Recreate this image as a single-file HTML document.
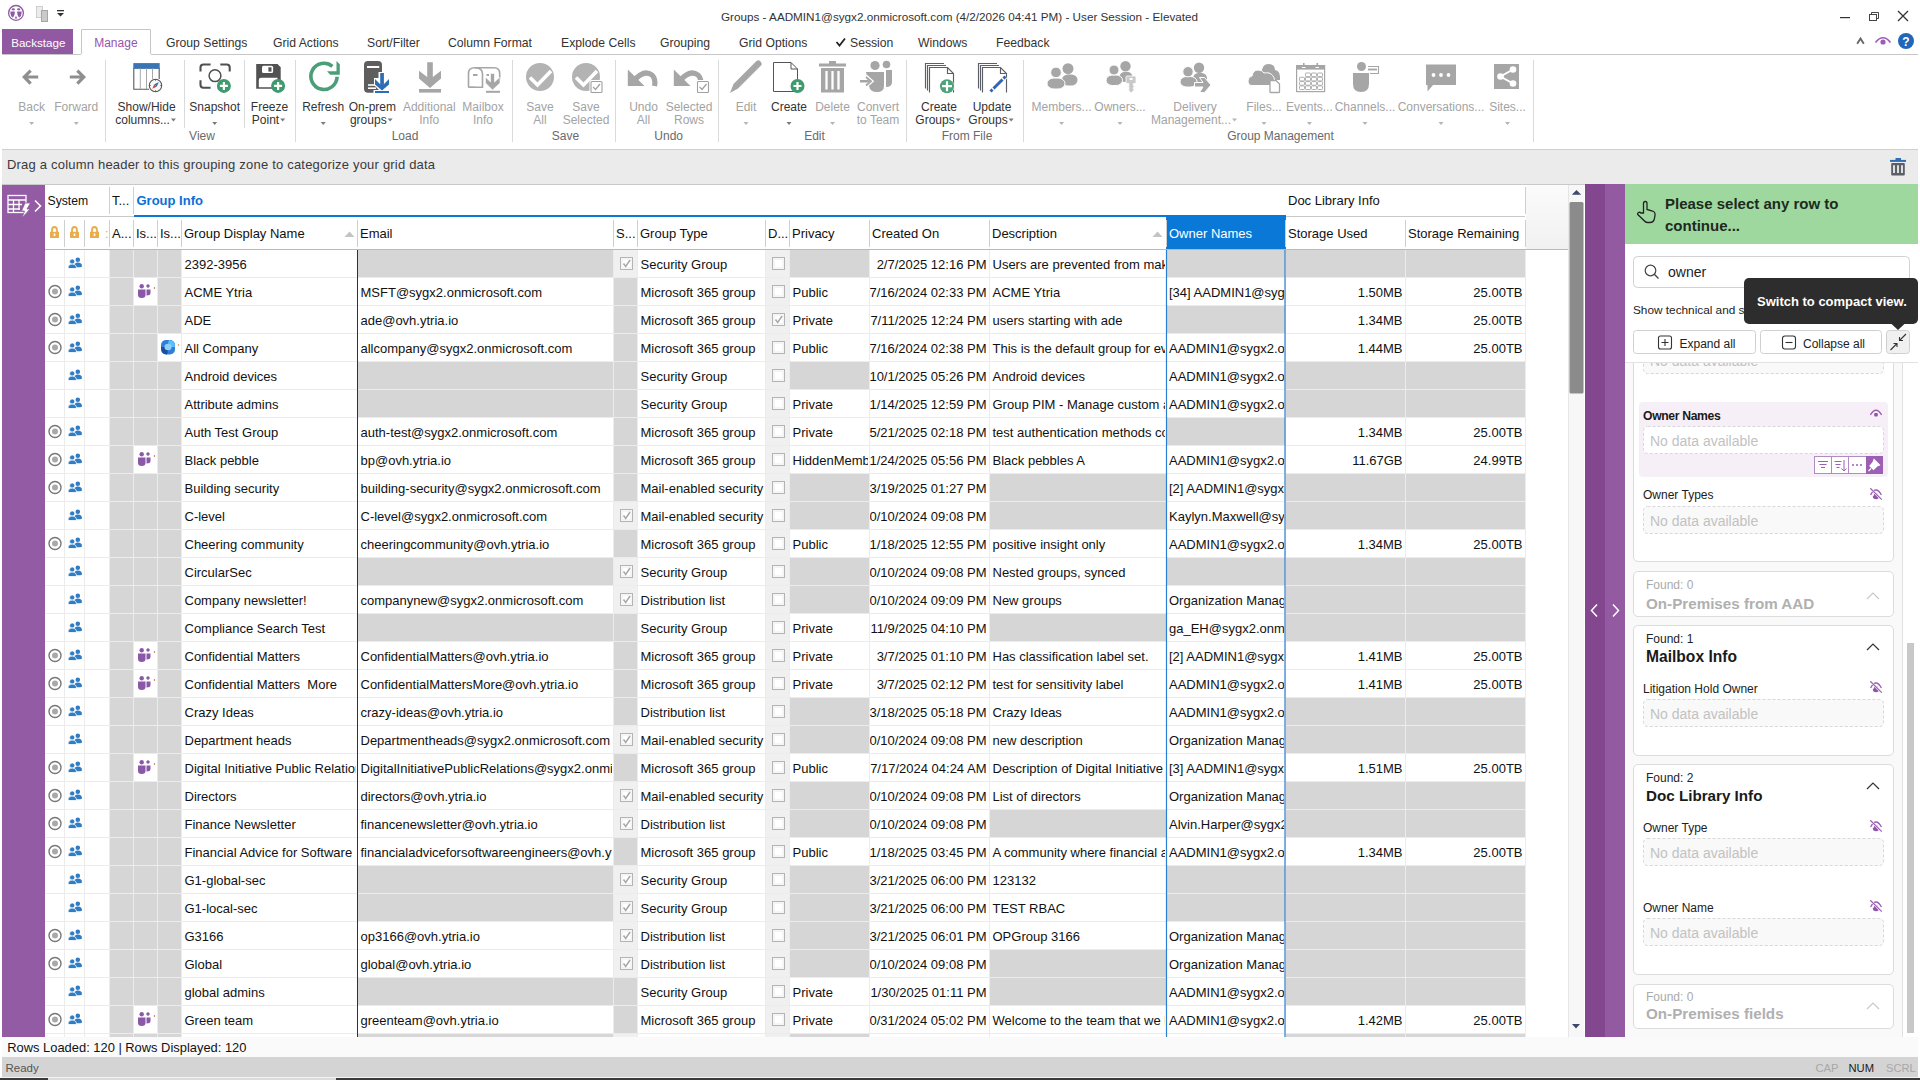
<!DOCTYPE html>
<html><head><meta charset="utf-8"><title>Groups</title>
<style>html,body{margin:0;padding:0;width:1920px;height:1080px;overflow:hidden;background:#fff;font-family:'Liberation Sans', sans-serif;}
svg text{white-space:pre;}</style></head>
<body><svg width="1920" height="1080" viewBox="0 0 1920 1080" style="position:absolute;left:0;top:0" font-family="'Liberation Sans', sans-serif"><defs><clipPath id="c_name"><rect x="182" y="250" width="174" height="787"/></clipPath><clipPath id="c_email"><rect x="358" y="250" width="254" height="787"/></clipPath><clipPath id="c_type"><rect x="638" y="250" width="126" height="787"/></clipPath><clipPath id="c_priv"><rect x="790" y="250" width="78" height="787"/></clipPath><clipPath id="c_created"><rect x="870" y="250" width="118" height="787"/></clipPath><clipPath id="c_desc"><rect x="990" y="250" width="175" height="787"/></clipPath><clipPath id="c_owner"><rect x="1167" y="250" width="117" height="787"/></clipPath><linearGradient id="hg" x1="0" y1="0" x2="0" y2="1"><stop offset="0" stop-color="#fbfbfb"/><stop offset="1" stop-color="#f1f1f1"/></linearGradient><clipPath id="c_panel"><rect x="1625" y="363" width="295" height="674"/></clipPath></defs><rect x="0" y="0" width="1920" height="1080" fill="#ffffff" />
<circle cx="16" cy="12.9" r="7.4" fill="none" stroke="#8e5aa2" stroke-width="1.3"/>
<g fill="#8e5aa2"><path d="M10.3 11.6 Q10.6 16.6 12.6 17.6 Q14.6 16.6 14.9 11.6 Z"/><path d="M21.7 11.6 Q21.4 16.6 19.4 17.6 Q17.4 16.6 17.1 11.6 Z"/><ellipse cx="13.3" cy="9.3" rx="1.7" ry="1.1"/><ellipse cx="18.7" cy="9.3" rx="1.7" ry="1.1"/><path d="M14.7 18.5 L16 15.8 L17.3 18.5 Z"/></g>
<rect x="36.5" y="6.5" width="6" height="11" fill="#ececec" stroke="#cfcfcf"/><rect x="41.5" y="10.5" width="6" height="11" fill="#cacaca" stroke="#a6a6a6"/>
<rect x="57" y="10" width="7" height="1.3" fill="#333"/><path d="M57 13 L64 13 L60.5 16.5 Z" fill="#333"/>
<text x="959.5" y="21" font-size="11.7" fill="#333" text-anchor="middle" font-weight="normal" >Groups - AADMIN1@sygx2.onmicrosoft.com (4/2/2026 04:41 PM) - User Session - Elevated</text>
<rect x="1840" y="17" width="10" height="1.2" fill="#333" />
<rect x="1869.5" y="14.5" width="7" height="6" fill="none" stroke="#444" stroke-width="1"/><path d="M1871.5 14.5 V12.5 H1878.5 V18.5 H1876.5" fill="none" stroke="#444" stroke-width="1"/>
<path d="M1898 11 L1908 21 M1908 11 L1898 21" stroke="#333" stroke-width="1.3"/>
<rect x="2" y="29" width="71" height="25" fill="#9159a2" />
<text x="11.2" y="47" font-size="11.6" fill="#ffffff" text-anchor="start" font-weight="normal" >Backstage</text>
<path d="M81.5 54 V29.5 H150.5 V54" fill="#fff" stroke="#c6c6c6" stroke-width="1"/>
<line x1="2" y1="54.5" x2="81" y2="54.5" stroke="#c6c6c6" stroke-width="1" />
<line x1="151" y1="54.5" x2="1918" y2="54.5" stroke="#c6c6c6" stroke-width="1" />
<text x="94.2" y="47" font-size="12" fill="#9a52ad" text-anchor="start" font-weight="normal" >Manage</text>
<text x="166" y="47" font-size="12.2" fill="#333" text-anchor="start" font-weight="normal" >Group Settings</text>
<text x="273" y="47" font-size="12.2" fill="#333" text-anchor="start" font-weight="normal" >Grid Actions</text>
<text x="367" y="47" font-size="12.2" fill="#333" text-anchor="start" font-weight="normal" >Sort/Filter</text>
<text x="448" y="47" font-size="12.2" fill="#333" text-anchor="start" font-weight="normal" >Column Format</text>
<text x="561" y="47" font-size="12.2" fill="#333" text-anchor="start" font-weight="normal" >Explode Cells</text>
<text x="660" y="47" font-size="12.2" fill="#333" text-anchor="start" font-weight="normal" >Grouping</text>
<text x="739" y="47" font-size="12.2" fill="#333" text-anchor="start" font-weight="normal" >Grid Options</text>
<text x="850" y="47" font-size="12.2" fill="#333" text-anchor="start" font-weight="normal" >Session</text>
<text x="918" y="47" font-size="12.2" fill="#333" text-anchor="start" font-weight="normal" >Windows</text>
<text x="996" y="47" font-size="12.2" fill="#333" text-anchor="start" font-weight="normal" >Feedback</text>
<path d="M836.5 42 L839.5 45.5 L845 38.5" fill="none" stroke="#222" stroke-width="1.8"/>
<path d="M1857.2 43.8 L1860.5 38.5 L1863.8 43.8" fill="none" stroke="#666" stroke-width="1.9"/>
<path d="M1875.5 42.5 Q1883 33 1890.5 42.5" fill="none" stroke="#a05ab8" stroke-width="1.6"/><circle cx="1883" cy="42" r="2.6" fill="#a05ab8"/>
<circle cx="1906" cy="41" r="8" fill="#2166b8"/><text x="1906" y="45.5" font-size="12" font-weight="bold" fill="#fff" text-anchor="middle">?</text>
<text x="31.6" y="111" font-size="12" fill="#a3a3a3" text-anchor="middle" font-weight="normal" >Back</text>
<path d="M29.1 122.0 L34.1 122.0 L31.6 125.0 Z" fill="#b5b5b5"/>
<text x="76.3" y="111" font-size="12" fill="#a3a3a3" text-anchor="middle" font-weight="normal" >Forward</text>
<path d="M73.8 122.0 L78.8 122.0 L76.3 125.0 Z" fill="#b5b5b5"/>
<text x="146.6" y="111" font-size="12" fill="#333333" text-anchor="middle" font-weight="normal" >Show/Hide</text>
<text x="142.6" y="124" font-size="12" fill="#333333" text-anchor="middle" font-weight="normal" >columns...</text>
<path d="M170.94296875 118.5 L175.94296875 118.5 L173.44296875 121.5 Z" fill="#7a7a7a"/>
<text x="214.7" y="111" font-size="12" fill="#333333" text-anchor="middle" font-weight="normal" >Snapshot</text>
<path d="M212.2 122.0 L217.2 122.0 L214.7 125.0 Z" fill="#7a7a7a"/>
<text x="269.5" y="111" font-size="12" fill="#333333" text-anchor="middle" font-weight="normal" >Freeze</text>
<text x="265.5" y="124" font-size="12" fill="#333333" text-anchor="middle" font-weight="normal" >Point</text>
<path d="M280.17578125 118.5 L285.17578125 118.5 L282.67578125 121.5 Z" fill="#7a7a7a"/>
<text x="323.2" y="111" font-size="12" fill="#333333" text-anchor="middle" font-weight="normal" >Refresh</text>
<path d="M320.7 122.0 L325.7 122.0 L323.2 125.0 Z" fill="#7a7a7a"/>
<text x="372.3" y="111" font-size="12" fill="#333333" text-anchor="middle" font-weight="normal" >On-prem</text>
<text x="368.3" y="124" font-size="12" fill="#333333" text-anchor="middle" font-weight="normal" >groups</text>
<path d="M387.6453125 118.5 L392.6453125 118.5 L390.1453125 121.5 Z" fill="#7a7a7a"/>
<text x="429.3" y="111" font-size="12" fill="#a3a3a3" text-anchor="middle" font-weight="normal" >Additional</text>
<text x="429.3" y="124" font-size="12" fill="#a3a3a3" text-anchor="middle" font-weight="normal" >Info</text>
<text x="483" y="111" font-size="12" fill="#a3a3a3" text-anchor="middle" font-weight="normal" >Mailbox</text>
<text x="483" y="124" font-size="12" fill="#a3a3a3" text-anchor="middle" font-weight="normal" >Info</text>
<text x="540" y="111" font-size="12" fill="#a3a3a3" text-anchor="middle" font-weight="normal" >Save</text>
<text x="540" y="124" font-size="12" fill="#a3a3a3" text-anchor="middle" font-weight="normal" >All</text>
<text x="586" y="111" font-size="12" fill="#a3a3a3" text-anchor="middle" font-weight="normal" >Save</text>
<text x="586" y="124" font-size="12" fill="#a3a3a3" text-anchor="middle" font-weight="normal" >Selected</text>
<text x="643.5" y="111" font-size="12" fill="#a3a3a3" text-anchor="middle" font-weight="normal" >Undo</text>
<text x="643.5" y="124" font-size="12" fill="#a3a3a3" text-anchor="middle" font-weight="normal" >All</text>
<text x="689" y="111" font-size="12" fill="#a3a3a3" text-anchor="middle" font-weight="normal" >Selected</text>
<text x="689" y="124" font-size="12" fill="#a3a3a3" text-anchor="middle" font-weight="normal" >Rows</text>
<text x="746" y="111" font-size="12" fill="#a3a3a3" text-anchor="middle" font-weight="normal" >Edit</text>
<path d="M743.5 122.0 L748.5 122.0 L746 125.0 Z" fill="#b5b5b5"/>
<text x="789" y="111" font-size="12" fill="#333333" text-anchor="middle" font-weight="normal" >Create</text>
<path d="M786.5 122.0 L791.5 122.0 L789 125.0 Z" fill="#7a7a7a"/>
<text x="832.5" y="111" font-size="12" fill="#a3a3a3" text-anchor="middle" font-weight="normal" >Delete</text>
<path d="M830.0 122.0 L835.0 122.0 L832.5 125.0 Z" fill="#b5b5b5"/>
<text x="878" y="111" font-size="12" fill="#a3a3a3" text-anchor="middle" font-weight="normal" >Convert</text>
<text x="878" y="124" font-size="12" fill="#a3a3a3" text-anchor="middle" font-weight="normal" >to Team</text>
<text x="939" y="111" font-size="12" fill="#333333" text-anchor="middle" font-weight="normal" >Create</text>
<text x="935" y="124" font-size="12" fill="#333333" text-anchor="middle" font-weight="normal" >Groups</text>
<path d="M955.67578125 118.5 L960.67578125 118.5 L958.17578125 121.5 Z" fill="#7a7a7a"/>
<text x="992" y="111" font-size="12" fill="#333333" text-anchor="middle" font-weight="normal" >Update</text>
<text x="988" y="124" font-size="12" fill="#333333" text-anchor="middle" font-weight="normal" >Groups</text>
<path d="M1008.67578125 118.5 L1013.67578125 118.5 L1011.17578125 121.5 Z" fill="#7a7a7a"/>
<text x="1061.6" y="111" font-size="12" fill="#a3a3a3" text-anchor="middle" font-weight="normal" >Members...</text>
<path d="M1059.1 122.0 L1064.1 122.0 L1061.6 125.0 Z" fill="#b5b5b5"/>
<text x="1120" y="111" font-size="12" fill="#a3a3a3" text-anchor="middle" font-weight="normal" >Owners...</text>
<path d="M1117.5 122.0 L1122.5 122.0 L1120 125.0 Z" fill="#b5b5b5"/>
<text x="1195" y="111" font-size="12" fill="#a3a3a3" text-anchor="middle" font-weight="normal" >Delivery</text>
<text x="1191" y="124" font-size="12" fill="#a3a3a3" text-anchor="middle" font-weight="normal" >Management...</text>
<path d="M1232.02265625 118.5 L1237.02265625 118.5 L1234.52265625 121.5 Z" fill="#b5b5b5"/>
<text x="1264" y="111" font-size="12" fill="#a3a3a3" text-anchor="middle" font-weight="normal" >Files...</text>
<path d="M1261.5 122.0 L1266.5 122.0 L1264 125.0 Z" fill="#b5b5b5"/>
<text x="1309.4" y="111" font-size="12" fill="#a3a3a3" text-anchor="middle" font-weight="normal" >Events...</text>
<path d="M1306.9 122.0 L1311.9 122.0 L1309.4 125.0 Z" fill="#b5b5b5"/>
<text x="1365" y="111" font-size="12" fill="#a3a3a3" text-anchor="middle" font-weight="normal" >Channels...</text>
<path d="M1362.5 122.0 L1367.5 122.0 L1365 125.0 Z" fill="#b5b5b5"/>
<text x="1441" y="111" font-size="12" fill="#a3a3a3" text-anchor="middle" font-weight="normal" >Conversations...</text>
<path d="M1438.5 122.0 L1443.5 122.0 L1441 125.0 Z" fill="#b5b5b5"/>
<text x="1507.5" y="111" font-size="12" fill="#a3a3a3" text-anchor="middle" font-weight="normal" >Sites...</text>
<path d="M1505.0 122.0 L1510.0 122.0 L1507.5 125.0 Z" fill="#b5b5b5"/>
<text x="202" y="139.5" font-size="12" fill="#6a6a6a" text-anchor="middle" font-weight="normal" >View</text>
<text x="405" y="139.5" font-size="12" fill="#6a6a6a" text-anchor="middle" font-weight="normal" >Load</text>
<text x="565.5" y="139.5" font-size="12" fill="#6a6a6a" text-anchor="middle" font-weight="normal" >Save</text>
<text x="668.7" y="139.5" font-size="12" fill="#6a6a6a" text-anchor="middle" font-weight="normal" >Undo</text>
<text x="814.5" y="139.5" font-size="12" fill="#6a6a6a" text-anchor="middle" font-weight="normal" >Edit</text>
<text x="967" y="139.5" font-size="12" fill="#6a6a6a" text-anchor="middle" font-weight="normal" >From File</text>
<text x="1280.5" y="139.5" font-size="12" fill="#6a6a6a" text-anchor="middle" font-weight="normal" >Group Management</text>
<line x1="105.5" y1="60" x2="105.5" y2="142" stroke="#dadada" stroke-width="1" />
<line x1="184.5" y1="60" x2="184.5" y2="128" stroke="#dadada" stroke-width="1" />
<line x1="244.5" y1="60" x2="244.5" y2="128" stroke="#dadada" stroke-width="1" />
<line x1="295.5" y1="60" x2="295.5" y2="142" stroke="#dadada" stroke-width="1" />
<line x1="512.5" y1="60" x2="512.5" y2="142" stroke="#dadada" stroke-width="1" />
<line x1="615.5" y1="60" x2="615.5" y2="142" stroke="#dadada" stroke-width="1" />
<line x1="718.5" y1="60" x2="718.5" y2="142" stroke="#dadada" stroke-width="1" />
<line x1="906.5" y1="60" x2="906.5" y2="142" stroke="#dadada" stroke-width="1" />
<line x1="1023.5" y1="60" x2="1023.5" y2="142" stroke="#dadada" stroke-width="1" />
<line x1="1533.5" y1="60" x2="1533.5" y2="142" stroke="#dadada" stroke-width="1" />
<line x1="2" y1="149.5" x2="1918" y2="149.5" stroke="#cfcfcf" stroke-width="1" />
<path d="M22 77 L29.5 69.5 L31.8 71.8 L28 75.6 H38.2 V78.6 H28 L31.8 82.4 L29.5 84.7 Z" fill="#8f8f8f"/>
<path d="M86 77 L78.5 69.5 L76.2 71.8 L80 75.6 H69.8 V78.6 H80 L76.2 82.4 L78.5 84.7 Z" fill="#8f8f8f"/>
<path d="M133.8 68 V89.2 H149 M159.2 68 V79" fill="none" stroke="#5a5a5a" stroke-width="1.1"/><rect x="133.3" y="63.1" width="26.4" height="5.8" fill="#3b74b3"/><path d="M140.3 68.5 V89 M146.5 68.5 V89 M152.5 68.5 V79" stroke="#a8a8a8" stroke-width="1"/><circle cx="155.5" cy="85.5" r="6.2" fill="#f8f8f8" stroke="#555" stroke-width="1.1"/><path d="M155.5 79.3 V80.6 M155.5 90.4 V91.7 M149.3 85.5 H150.6 M160.4 85.5 H161.7" stroke="#555" stroke-width="1"/><path d="M152.3 88.8 L154.3 84.3 L156.7 86.7 Z" fill="#d9482b"/><path d="M158.9 82 L154.3 84.3 L156.7 86.7 Z" fill="#3372bd"/>
<path d="M200.5 71.5 V67.5 Q200.5 64.5 203.5 64.5 H210.6 M220.3 64.5 H226.7 Q229.7 64.5 229.7 67.5 V71.6 M200.5 80.3 V84.8 Q200.5 87.7 203.5 87.7 H210.6" fill="none" stroke="#505050" stroke-width="2.1"/><circle cx="215" cy="75.7" r="5.9" fill="none" stroke="#505050" stroke-width="1.5"/>
<circle cx="223.9" cy="85.9" r="7" fill="#3f9b6e"/><path d="M219.9 85.9 H227.9 M223.9 81.9 V89.9" stroke="#fff" stroke-width="2.2"/>
<path d="M256.2 64 H277.5 L280.7 67.2 V88.7 H256.2 Z" fill="#525252"/><rect x="262" y="65.8" width="11.1" height="7.3" rx="1.5" fill="#fff"/><rect x="268.4" y="67.3" width="3.1" height="4.3" fill="#525252"/><path d="M258.8 87.2 V80 Q258.8 77.8 261 77.8 H277.5 V87.2 Z" fill="#fff"/>
<circle cx="278.1" cy="85.9" r="7" fill="#3f9b6e"/><path d="M274.1 85.9 H282.1 M278.1 81.9 V89.9" stroke="#fff" stroke-width="2.2"/>
<path d="M337.1 76.8 A13.1 13.1 0 1 1 332.4 66.3" fill="none" stroke="#4a9e78" stroke-width="3.6"/><path d="M336.5 61 L339.8 64.3 V74.8 H330.2 L327 71.2 H336.5 Z" fill="#4a9e78"/>
<rect x="364" y="61" width="18" height="31.7" rx="4" fill="#5e5e5e"/><rect x="367" y="66" width="12.2" height="2" fill="#fff"/><rect x="368" y="84.2" width="8" height="1.6" fill="#fff"/><rect x="368" y="87.4" width="8" height="1.6" fill="#fff"/><path d="M374 78 L378.5 78 V72 H385.5 V78 H390 V85 L382 93 L374 85 Z M373.5 90 H390.5 V94 H373.5 Z" fill="#fff"/><rect x="380.2" y="73" width="3.7" height="13" fill="#2e6db5"/><path d="M375 79 L382 86 L389 79 V84.5 L382 90.5 L375 84.5 Z" fill="#2e6db5"/><rect x="375" y="91" width="14" height="2" fill="#2e6db5"/>
<path d="M427.2 62.2 H432.8 V77 L441 70.8 V78.5 L430 88 L419 78.5 V70.8 L427.2 77 Z" fill="#a6a6a6"/><rect x="419" y="89" width="22" height="3.6" fill="#a6a6a6"/>
<path d="M474.5 87.2 H469 Q468.5 87.2 468.5 86.5 V73.5 Q468.5 67.7 474.5 67.7 H494 Q499.7 67.7 499.7 73.5 V79" fill="none" stroke="#a6a6a6" stroke-width="1.6"/><path d="M475 67.7 Q482.5 67.7 482.5 74 V87.2 H470" fill="none" stroke="#a6a6a6" stroke-width="1.6"/><rect x="473" y="74" width="4.5" height="2" fill="#a6a6a6"/><rect x="486.5" y="74" width="2.5" height="2" fill="#a6a6a6"/><path d="M490.5 73.5 H494.5 V82 L500 77 V83 L492.5 90 L485.5 83 V77 L490.5 82 Z" fill="#a6a6a6" stroke="#fff" stroke-width="0.6"/><rect x="486" y="90.8" width="14" height="2" fill="#a6a6a6"/>
<circle cx="540" cy="77" r="14" fill="#b3b3b3"/><path d="M530 77.5 L537.5 85 L551 71" fill="none" stroke="#fff" stroke-width="3.6"/>
<circle cx="586" cy="77" r="14" fill="#b3b3b3"/><path d="M576 77.5 L583.5 85 L597 71" fill="none" stroke="#fff" stroke-width="3.6"/>
<rect x="590.5" y="81" width="12" height="12" rx="1.2" fill="#fff" stroke="#fff" stroke-width="2"/><rect x="591.0" y="81.5" width="11" height="11" rx="1" fill="#fff" stroke="#a0a0a0" stroke-width="1.1"/><path d="M593.0 86.8 L595.5 89.5 L600.0 84" fill="none" stroke="#a0a0a0" stroke-width="1.2"/>
<path d="M634 80.5 Q644 69 652 75 Q656 79 654.5 86" fill="none" stroke="#a6a6a6" stroke-width="5.2"/><path d="M627.8 69.6 V86 H644.5 Z" fill="#a6a6a6"/>
<path d="M680 80.5 Q690 69 698 75 Q702 79 700.5 86" fill="none" stroke="#a6a6a6" stroke-width="5.2"/><path d="M673.8 69.6 V86 H690.5 Z" fill="#a6a6a6"/>
<rect x="697" y="81" width="12" height="12" rx="1.2" fill="#fff" stroke="#fff" stroke-width="2"/><rect x="697.5" y="81.5" width="11" height="11" rx="1" fill="#fff" stroke="#a0a0a0" stroke-width="1.1"/><path d="M699.5 86.8 L702 89.5 L706.5 84" fill="none" stroke="#a0a0a0" stroke-width="1.2"/>
<path d="M730 93 L733.5 84 L756.5 61 Q758.5 59.5 760.5 61.5 Q762.5 63.5 761 65.5 L738 88.5 Z" fill="#a6a6a6"/>
<path d="M773.5 62.5 H791 L797.5 69 V91.5 H773.5 Z M791 62.5 V69 H797.5" fill="#fff" stroke="#555" stroke-width="1"/>
<circle cx="797.5" cy="86" r="7" fill="#3f9b6e"/><path d="M793.5 86 H801.5 M797.5 82 V90" stroke="#fff" stroke-width="2.2"/>
<rect x="819" y="63.5" width="27" height="3" fill="#a6a6a6"/><rect x="829" y="61" width="7" height="3" fill="#a6a6a6"/><path d="M821 68 H844 V92.5 H821 Z" fill="#a6a6a6"/><path d="M826.5 71 V89.5 M832.5 71 V89.5 M838.5 71 V89.5" stroke="#fff" stroke-width="2.3"/>
<circle cx="875" cy="65.5" r="4.6" fill="#a6a6a6"/><circle cx="886.5" cy="64.5" r="3.8" fill="#a6a6a6"/><path d="M866 72 H884 V86 Q884 92 877 92 Q870 92 869 86 Z" fill="#a6a6a6"/><path d="M886 70 H892 V82 Q892 87 886 87 Z" fill="#a6a6a6"/><rect x="860" y="80" width="10" height="2.5" fill="#a6a6a6"/><path d="M866 76 L872 81.2 L866 86.5" fill="none" stroke="#fff" stroke-width="3"/><path d="M866 77 L871 81.2 L866 85.5" fill="none" stroke="#a6a6a6" stroke-width="1.8"/>
<path d="M925.5 88.5 V63.5 H944" fill="none" stroke="#5c5f66" stroke-width="1.15"/><path d="M927.5 90.5 V65.5 H946" fill="none" stroke="#5c5f66" stroke-width="1.15"/><path d="M929.5 92.5 V67.5 H947.5 L953.5 73.5 V92.5" fill="#fff" stroke="#5c5f66" stroke-width="1.15"/><path d="M947.5 67.5 V73.5 H953.5" fill="none" stroke="#5c5f66" stroke-width="1.15"/>
<path d="M978.5 88.5 V63.5 H997" fill="none" stroke="#5c5f66" stroke-width="1.15"/><path d="M980.5 90.5 V65.5 H999" fill="none" stroke="#5c5f66" stroke-width="1.15"/><path d="M982.5 92.5 V67.5 H1000.5 L1006.5 73.5 V92.5" fill="#fff" stroke="#5c5f66" stroke-width="1.15"/><path d="M1000.5 67.5 V73.5 H1006.5" fill="none" stroke="#5c5f66" stroke-width="1.15"/>
<circle cx="947" cy="86.2" r="7.5" fill="#fff"/><circle cx="947" cy="86.2" r="7" fill="#4da27a"/><path d="M942 86.2 H952 M947 81.2 V91.2" stroke="#fff" stroke-width="2.2"/>
<path d="M990.5 91.5 L1005.5 76.5" stroke="#fff" stroke-width="5"/><path d="M990.5 91.5 L1005.5 76.5" stroke="#2f66b5" stroke-width="3"/><path d="M992.5 89.5 L993.5 88.5 M1002.5 79.5 L1003.5 78.5" stroke="#fff" stroke-width="3.2"/>
<rect x="1062" y="74.5" width="15.5" height="11" rx="5.961538461538462" ry="5.5" fill="#a6a6a6"/><circle cx="1068" cy="68.7" r="5.5" fill="#a6a6a6"/>
<rect x="1047" y="78" width="18" height="11" rx="6.9230769230769225" ry="5.5" fill="#a6a6a6" stroke="#fff" stroke-width="1"/><circle cx="1056" cy="72.4" r="5.3" fill="#a6a6a6" stroke="#fff" stroke-width="1"/>
<rect x="1119.5" y="72" width="13" height="10" rx="5.0" ry="5.0" fill="#a6a6a6"/><circle cx="1125.5" cy="66.3" r="5.2" fill="#a6a6a6"/>
<rect x="1106" y="75" width="16.5" height="10.5" rx="6.346153846153846" ry="5.25" fill="#a6a6a6" stroke="#fff" stroke-width="1"/><circle cx="1114" cy="70" r="5" fill="#a6a6a6" stroke="#fff" stroke-width="1"/>
<path d="M1127 76 H1135 Q1136 76 1136 77 V82.5 Q1136 83.5 1135 83.5 H1133.3 V85.5 L1134.5 86.5 L1133.3 87.5 V89 L1134.3 90 L1131.2 93 L1128.8 90.6 V83.5 H1127 Q1126 83.5 1126 82.5 V77 Q1126 76 1127 76 Z" fill="#c9c9c9" stroke="#fff" stroke-width="0.8"/><rect x="1129.6" y="78" width="3" height="2" fill="#fff"/>
<rect x="1193" y="73" width="14" height="11" rx="5.384615384615384" ry="5.5" fill="#a6a6a6"/><circle cx="1199" cy="67.7" r="5.2" fill="#a6a6a6"/>
<rect x="1180" y="76.5" width="17" height="10.5" rx="6.538461538461538" ry="5.25" fill="#a6a6a6" stroke="#fff" stroke-width="1"/><circle cx="1188" cy="71.7" r="5.2" fill="#a6a6a6" stroke="#fff" stroke-width="1"/>
<path d="M1194.5 82.5 H1203 L1199.5 77.5 H1204.5 L1211 85 L1204.5 92.5 H1199.5 L1203 87 H1194.5 Z" fill="#a6a6a6" stroke="#fff" stroke-width="1"/>
<path d="M1262 72 Q1262 64 1268.5 64 Q1274.5 64 1275 70 Q1280 71 1280 77 V80 H1266 Z" fill="#a6a6a6"/>
<path d="M1252 85.5 Q1248 85.5 1248 81 Q1248 76.5 1252 76 Q1253 70 1258 70 Q1262 70 1264 73 Q1266.5 72.5 1269 73 Q1274 75 1274.5 80 V85.5 Z" fill="#a6a6a6" stroke="#fff" stroke-width="1"/>
<path d="M1270 80.5 H1276 L1279.5 84 V92 Q1279.5 92.5 1279 92.5 H1270.5 Q1270 92.5 1270 92 Z" fill="#fff" stroke="#a6a6a6" stroke-width="1.3"/>
<rect x="1296.6" y="65.6" width="28" height="26" fill="#fff" stroke="#a6a6a6" stroke-width="1.2"/><rect x="1296" y="65" width="29" height="4.6" fill="#a6a6a6"/><path d="M1303.8 63 V67 M1317.3 63 V67" stroke="#a6a6a6" stroke-width="1.6"/><path d="M1302 67.5 H1305.5 M1315.5 67.5 H1319" stroke="#fff" stroke-width="1"/>
<rect x="1305.5" y="73.0" width="5" height="3.6" rx="0.8" fill="none" stroke="#a6a6a6" stroke-width="0.9"/><rect x="1311.5" y="73.0" width="5" height="3.6" rx="0.8" fill="none" stroke="#a6a6a6" stroke-width="0.9"/><rect x="1317.5" y="73.0" width="5" height="3.6" rx="0.8" fill="none" stroke="#a6a6a6" stroke-width="0.9"/><rect x="1299.5" y="77.3" width="5" height="3.6" rx="0.8" fill="none" stroke="#a6a6a6" stroke-width="0.9"/><rect x="1305.5" y="77.3" width="5" height="3.6" rx="0.8" fill="none" stroke="#a6a6a6" stroke-width="0.9"/><rect x="1311.5" y="77.3" width="5" height="3.6" rx="0.8" fill="none" stroke="#a6a6a6" stroke-width="0.9"/><rect x="1317.5" y="77.3" width="5" height="3.6" rx="0.8" fill="none" stroke="#a6a6a6" stroke-width="0.9"/><rect x="1299.5" y="81.6" width="5" height="3.6" rx="0.8" fill="none" stroke="#a6a6a6" stroke-width="0.9"/><rect x="1305.5" y="81.6" width="5" height="3.6" rx="0.8" fill="none" stroke="#a6a6a6" stroke-width="0.9"/><rect x="1311.5" y="81.6" width="5" height="3.6" rx="0.8" fill="none" stroke="#a6a6a6" stroke-width="0.9"/><rect x="1317.5" y="81.6" width="5" height="3.6" rx="0.8" fill="none" stroke="#a6a6a6" stroke-width="0.9"/><rect x="1299.5" y="85.9" width="5" height="3.6" rx="0.8" fill="none" stroke="#a6a6a6" stroke-width="0.9"/><rect x="1305.5" y="85.9" width="5" height="3.6" rx="0.8" fill="none" stroke="#a6a6a6" stroke-width="0.9"/><rect x="1311.5" y="85.9" width="5" height="3.6" rx="0.8" fill="none" stroke="#a6a6a6" stroke-width="0.9"/><rect x="1317.5" y="85.9" width="5" height="3.6" rx="0.8" fill="none" stroke="#a6a6a6" stroke-width="0.9"/>
<circle cx="1361.5" cy="66.5" r="4.5" fill="#a6a6a6"/><path d="M1353 73 H1369 V84 Q1369 92 1361 92 Q1353 92 1353 84 Z" fill="#a6a6a6"/><path d="M1368 66.5 H1378.5 V73.5 H1370" fill="none" stroke="#a6a6a6" stroke-width="1.1"/><rect x="1368" y="68.6" width="9" height="1.8" fill="#a6a6a6"/>
<path d="M1426 64.5 H1456 V85 H1433 L1427.5 91.5 V85 H1426 Z" fill="#a6a6a6"/><circle cx="1433.5" cy="75" r="1.9" fill="#fff"/><circle cx="1441" cy="75" r="1.9" fill="#fff"/><circle cx="1448.5" cy="75" r="1.9" fill="#fff"/>
<rect x="1494" y="64" width="25" height="25" fill="#a6a6a6"/><path d="M1513 69.5 L1500.5 76.5 L1513 83.5" fill="none" stroke="#fff" stroke-width="2"/><circle cx="1513" cy="69.5" r="3.3" fill="#fff"/><circle cx="1500.5" cy="76.5" r="3.3" fill="#fff"/><circle cx="1513" cy="83.5" r="3.3" fill="#fff"/>
<rect x="2" y="150" width="1918" height="34" fill="#ebebeb" />
<line x1="2" y1="184.5" x2="1920" y2="184.5" stroke="#c9c9c9" stroke-width="1" />
<text x="7" y="169" font-size="13" fill="#3a3a3a" text-anchor="start" font-weight="normal" letter-spacing="0.2">Drag a column header to this grouping zone to categorize your grid data</text>
<rect x="1890" y="159.9" width="16" height="2" fill="#2f6db5"/><rect x="1895.5" y="158" width="5.5" height="2.5" fill="#2f6db5"/><rect x="1891.2" y="163.1" width="13.6" height="12.5" rx="1" fill="#5c5f66"/><path d="M1894 165.3 V173 M1898 165.3 V173 M1902 165.3 V173" stroke="#fff" stroke-width="1.6"/>
<rect x="2" y="185" width="43" height="852" fill="#925ba3" />
<g fill="none" stroke="#fff" stroke-width="1.3"><rect x="8" y="195.5" width="18" height="17"/><path d="M8 200 H26 M8 204.5 H22 M8 209 H20 M13.5 200 V212.5 M19 200 V210"/></g><path d="M25 203 L30.5 203 L27 209 L30 209 L22 218 L24.5 211 L21.5 211 Z" fill="#fff" stroke="#925ba3" stroke-width="0.8"/><path d="M35 200.5 L40.5 206 L35 211.5" fill="none" stroke="#fff" stroke-width="1.6"/>
<rect x="45" y="185" width="1480" height="64" fill="#ffffff" />
<text x="47.5" y="205" font-size="12.2" fill="#111" text-anchor="start" font-weight="normal" >System</text>
<text x="112" y="205" font-size="13" fill="#111" text-anchor="start" font-weight="normal" >T...</text>
<text x="136.5" y="205" font-size="13" fill="#0a6fd6" text-anchor="start" font-weight="bold" >Group Info</text>
<text x="1288" y="205" font-size="13" fill="#111" text-anchor="start" font-weight="normal" >Doc Library Info</text>
<line x1="109.5" y1="187" x2="109.5" y2="214" stroke="#cfcfcf" stroke-width="1" />
<line x1="133.5" y1="187" x2="133.5" y2="214" stroke="#cfcfcf" stroke-width="1" />
<line x1="1525.5" y1="187" x2="1525.5" y2="214" stroke="#cfcfcf" stroke-width="1" />
<line x1="45" y1="216.5" x2="1525" y2="216.5" stroke="#c9c9c9" stroke-width="1" />
<rect x="134" y="215" width="1152" height="2" fill="#0a78d7" />
<rect x="1166" y="215" width="120" height="34" fill="#0a78d7" />
<line x1="64.5" y1="220" x2="64.5" y2="247" stroke="#cfcfcf" stroke-width="1" />
<line x1="84.5" y1="220" x2="84.5" y2="247" stroke="#cfcfcf" stroke-width="1" />
<line x1="109.5" y1="220" x2="109.5" y2="247" stroke="#cfcfcf" stroke-width="1" />
<line x1="133.5" y1="220" x2="133.5" y2="247" stroke="#cfcfcf" stroke-width="1" />
<line x1="157.5" y1="220" x2="157.5" y2="247" stroke="#cfcfcf" stroke-width="1" />
<line x1="181.5" y1="220" x2="181.5" y2="247" stroke="#cfcfcf" stroke-width="1" />
<line x1="357.5" y1="220" x2="357.5" y2="247" stroke="#cfcfcf" stroke-width="1" />
<line x1="613.5" y1="220" x2="613.5" y2="247" stroke="#cfcfcf" stroke-width="1" />
<line x1="637.5" y1="220" x2="637.5" y2="247" stroke="#cfcfcf" stroke-width="1" />
<line x1="765.5" y1="220" x2="765.5" y2="247" stroke="#cfcfcf" stroke-width="1" />
<line x1="789.5" y1="220" x2="789.5" y2="247" stroke="#cfcfcf" stroke-width="1" />
<line x1="869.5" y1="220" x2="869.5" y2="247" stroke="#cfcfcf" stroke-width="1" />
<line x1="989.5" y1="220" x2="989.5" y2="247" stroke="#cfcfcf" stroke-width="1" />
<line x1="1166.5" y1="220" x2="1166.5" y2="247" stroke="#cfcfcf" stroke-width="1" />
<line x1="1285.5" y1="220" x2="1285.5" y2="247" stroke="#cfcfcf" stroke-width="1" />
<line x1="1405.5" y1="220" x2="1405.5" y2="247" stroke="#cfcfcf" stroke-width="1" />
<line x1="1525.5" y1="220" x2="1525.5" y2="247" stroke="#cfcfcf" stroke-width="1" />
<path d="M52 232 V230.5 Q52 227 54.5 227 Q57 227 57 230.5 V232" fill="none" stroke="#e8ad4d" stroke-width="1.8"/><rect x="50" y="231.8" width="9" height="6.2" fill="#e8ad4d"/><rect x="53.7" y="233.5" width="1.6" height="2.5" fill="#fff"/>
<path d="M72 232 V230.5 Q72 227 74.5 227 Q77 227 77 230.5 V232" fill="none" stroke="#e8ad4d" stroke-width="1.8"/><rect x="70" y="231.8" width="9" height="6.2" fill="#e8ad4d"/><rect x="73.7" y="233.5" width="1.6" height="2.5" fill="#fff"/>
<path d="M92 232 V230.5 Q92 227 94.5 227 Q97 227 97 230.5 V232" fill="none" stroke="#e8ad4d" stroke-width="1.8"/><rect x="90" y="231.8" width="9" height="6.2" fill="#e8ad4d"/><rect x="93.7" y="233.5" width="1.6" height="2.5" fill="#fff"/>
<text x="105" y="238" font-size="13" fill="#e8ad4d" text-anchor="start" font-weight="normal" >:</text>
<text x="112" y="238" font-size="13" fill="#111" text-anchor="start" font-weight="normal" >A...</text>
<text x="136" y="238" font-size="13" fill="#111" text-anchor="start" font-weight="normal" >Is...</text>
<text x="160" y="238" font-size="13" fill="#111" text-anchor="start" font-weight="normal" >Is...</text>
<text x="184" y="238" font-size="13" fill="#111" text-anchor="start" font-weight="normal" >Group Display Name</text>
<text x="360" y="238" font-size="13" fill="#111" text-anchor="start" font-weight="normal" >Email</text>
<text x="616" y="238" font-size="13" fill="#111" text-anchor="start" font-weight="normal" >S...</text>
<text x="640" y="238" font-size="13" fill="#111" text-anchor="start" font-weight="normal" >Group Type</text>
<text x="768" y="238" font-size="13" fill="#111" text-anchor="start" font-weight="normal" >D...</text>
<text x="792" y="238" font-size="13" fill="#111" text-anchor="start" font-weight="normal" >Privacy</text>
<text x="872" y="238" font-size="13" fill="#111" text-anchor="start" font-weight="normal" >Created On</text>
<text x="992" y="238" font-size="13" fill="#111" text-anchor="start" font-weight="normal" >Description</text>
<text x="1169" y="238" font-size="13" fill="#ffffff" text-anchor="start" font-weight="normal" >Owner Names</text>
<text x="1288" y="238" font-size="13" fill="#111" text-anchor="start" font-weight="normal" >Storage Used</text>
<text x="1408" y="238" font-size="13" fill="#111" text-anchor="start" font-weight="normal" >Storage Remaining</text>
<path d="M344.5 237 L349.5 231.5 L354.5 237 Z" fill="#c4c4c4"/><path d="M1152.5 237 L1157.5 231.5 L1162.5 237 Z" fill="#c4c4c4"/>
<line x1="45" y1="249.5" x2="1525" y2="249.5" stroke="#b9b9b9" stroke-width="1" />
<line x1="45" y1="277.5" x2="1525" y2="277.5" stroke="#ececec" stroke-width="1" />
<line x1="64.5" y1="250" x2="64.5" y2="277" stroke="#ececec" stroke-width="1" />
<line x1="84.5" y1="250" x2="84.5" y2="277" stroke="#ececec" stroke-width="1" />
<line x1="109.5" y1="250" x2="109.5" y2="277" stroke="#ececec" stroke-width="1" />
<line x1="133.5" y1="250" x2="133.5" y2="277" stroke="#ececec" stroke-width="1" />
<line x1="157.5" y1="250" x2="157.5" y2="277" stroke="#ececec" stroke-width="1" />
<line x1="181.5" y1="250" x2="181.5" y2="277" stroke="#ececec" stroke-width="1" />
<line x1="357.5" y1="250" x2="357.5" y2="277" stroke="#ececec" stroke-width="1" />
<line x1="613.5" y1="250" x2="613.5" y2="277" stroke="#ececec" stroke-width="1" />
<line x1="637.5" y1="250" x2="637.5" y2="277" stroke="#ececec" stroke-width="1" />
<line x1="765.5" y1="250" x2="765.5" y2="277" stroke="#ececec" stroke-width="1" />
<line x1="789.5" y1="250" x2="789.5" y2="277" stroke="#ececec" stroke-width="1" />
<line x1="869.5" y1="250" x2="869.5" y2="277" stroke="#ececec" stroke-width="1" />
<line x1="989.5" y1="250" x2="989.5" y2="277" stroke="#ececec" stroke-width="1" />
<line x1="1166.5" y1="250" x2="1166.5" y2="277" stroke="#ececec" stroke-width="1" />
<line x1="1285.5" y1="250" x2="1285.5" y2="277" stroke="#ececec" stroke-width="1" />
<line x1="1405.5" y1="250" x2="1405.5" y2="277" stroke="#ececec" stroke-width="1" />
<line x1="1525.5" y1="250" x2="1525.5" y2="277" stroke="#ececec" stroke-width="1" />
<rect x="110" y="250" width="23" height="27" fill="#d6d6d6" />
<rect x="134" y="250" width="23" height="27" fill="#d6d6d6" />
<rect x="158" y="250" width="23" height="27" fill="#d6d6d6" />
<g fill="#2f7dc5"><circle cx="77.8" cy="259.8" r="2.3"/><path d="M74 267.3 Q74 262.5 77.8 262.5 Q82 262.5 82 266.0 Q82 267.3 80 267.3 Z"/><circle cx="72.2" cy="261.5" r="2.6" fill="#2f7dc5" stroke="#fff" stroke-width="0.8"/><path d="M68 268.5 Q68 264.1 72.2 264.1 Q76.5 264.1 76.5 268.5 Z" stroke="#fff" stroke-width="0.8"/></g>
<rect x="358" y="250" width="255" height="27" fill="#d6d6d6" />
<text x="184.5" y="269" font-size="13" fill="#111" text-anchor="start" font-weight="normal" clip-path="url(#c_name)">2392-3956</text>
<rect x="614" y="250" width="23" height="27" fill="#f0f0f0" />
<rect x="620.5" y="257.5" width="12" height="12" fill="#fff" stroke="#b4b4b4"/><rect x="622.0" y="259" width="9" height="9" fill="none" stroke="#ececec"/>
<path d="M623.5 263.5 L625.7 266.5 L630.0 260" fill="none" stroke="#a8a8a8" stroke-width="1.5"/>
<text x="640.5" y="269" font-size="13" fill="#111" text-anchor="start" font-weight="normal" clip-path="url(#c_type)">Security Group</text>
<rect x="766" y="250" width="23" height="27" fill="#f0f0f0" />
<rect x="772.5" y="257.5" width="12" height="12" fill="#fff" stroke="#b4b4b4"/><rect x="774.0" y="259" width="9" height="9" fill="none" stroke="#ececec"/>
<rect x="790" y="250" width="79" height="27" fill="#d6d6d6" />
<text x="986.5" y="269" font-size="13" fill="#111" text-anchor="end" font-weight="normal" clip-path="url(#c_created)">2/7/2025 12:16 PM</text>
<text x="992.5" y="269" font-size="13" fill="#111" text-anchor="start" font-weight="normal" clip-path="url(#c_desc)">Users are prevented from making</text>
<rect x="1167" y="250" width="118" height="27" fill="#d6d6d6" />
<rect x="1286" y="250" width="119" height="27" fill="#d6d6d6" />
<rect x="1406" y="250" width="119" height="27" fill="#d6d6d6" />
<line x1="45" y1="305.5" x2="1525" y2="305.5" stroke="#ececec" stroke-width="1" />
<line x1="64.5" y1="278" x2="64.5" y2="305" stroke="#ececec" stroke-width="1" />
<line x1="84.5" y1="278" x2="84.5" y2="305" stroke="#ececec" stroke-width="1" />
<line x1="109.5" y1="278" x2="109.5" y2="305" stroke="#ececec" stroke-width="1" />
<line x1="133.5" y1="278" x2="133.5" y2="305" stroke="#ececec" stroke-width="1" />
<line x1="157.5" y1="278" x2="157.5" y2="305" stroke="#ececec" stroke-width="1" />
<line x1="181.5" y1="278" x2="181.5" y2="305" stroke="#ececec" stroke-width="1" />
<line x1="357.5" y1="278" x2="357.5" y2="305" stroke="#ececec" stroke-width="1" />
<line x1="613.5" y1="278" x2="613.5" y2="305" stroke="#ececec" stroke-width="1" />
<line x1="637.5" y1="278" x2="637.5" y2="305" stroke="#ececec" stroke-width="1" />
<line x1="765.5" y1="278" x2="765.5" y2="305" stroke="#ececec" stroke-width="1" />
<line x1="789.5" y1="278" x2="789.5" y2="305" stroke="#ececec" stroke-width="1" />
<line x1="869.5" y1="278" x2="869.5" y2="305" stroke="#ececec" stroke-width="1" />
<line x1="989.5" y1="278" x2="989.5" y2="305" stroke="#ececec" stroke-width="1" />
<line x1="1166.5" y1="278" x2="1166.5" y2="305" stroke="#ececec" stroke-width="1" />
<line x1="1285.5" y1="278" x2="1285.5" y2="305" stroke="#ececec" stroke-width="1" />
<line x1="1405.5" y1="278" x2="1405.5" y2="305" stroke="#ececec" stroke-width="1" />
<line x1="1525.5" y1="278" x2="1525.5" y2="305" stroke="#ececec" stroke-width="1" />
<rect x="110" y="278" width="23" height="27" fill="#d6d6d6" />
<g fill="#8b57a8"><circle cx="141.7" cy="286.3" r="2.2"/><circle cx="148" cy="286" r="1.7"/><path d="M138 289.5 H145.5 V295 Q145.5 298 141.7 298 Q138 298 138 295 Z"/><path d="M146.5 289.5 H150.5 V293 Q150.5 295.5 146.5 295.5 Z"/></g><circle cx="154.5" cy="288" r="0.7" fill="#b04a3a"/>
<rect x="158" y="278" width="23" height="27" fill="#d6d6d6" />
<circle cx="55" cy="291.5" r="6" fill="#fff" stroke="#777" stroke-width="1.4"/><circle cx="55" cy="291.5" r="3" fill="#a9a9a9"/>
<g fill="#2f7dc5"><circle cx="77.8" cy="287.8" r="2.3"/><path d="M74 295.3 Q74 290.5 77.8 290.5 Q82 290.5 82 294.0 Q82 295.3 80 295.3 Z"/><circle cx="72.2" cy="289.5" r="2.6" fill="#2f7dc5" stroke="#fff" stroke-width="0.8"/><path d="M68 296.5 Q68 292.1 72.2 292.1 Q76.5 292.1 76.5 296.5 Z" stroke="#fff" stroke-width="0.8"/></g>
<text x="360.5" y="297" font-size="13" fill="#111" text-anchor="start" font-weight="normal" clip-path="url(#c_email)">MSFT@sygx2.onmicrosoft.com</text>
<text x="184.5" y="297" font-size="13" fill="#111" text-anchor="start" font-weight="normal" clip-path="url(#c_name)">ACME Ytria</text>
<rect x="614" y="278" width="23" height="27" fill="#d6d6d6" />
<text x="640.5" y="297" font-size="13" fill="#111" text-anchor="start" font-weight="normal" clip-path="url(#c_type)">Microsoft 365 group</text>
<rect x="766" y="278" width="23" height="27" fill="#f0f0f0" />
<rect x="772.5" y="285.5" width="12" height="12" fill="#fff" stroke="#b4b4b4"/><rect x="774.0" y="287" width="9" height="9" fill="none" stroke="#ececec"/>
<text x="792.5" y="297" font-size="13" fill="#111" text-anchor="start" font-weight="normal" clip-path="url(#c_priv)">Public</text>
<text x="986.5" y="297" font-size="13" fill="#111" text-anchor="end" font-weight="normal" clip-path="url(#c_created)">7/16/2024 02:33 PM</text>
<text x="992.5" y="297" font-size="13" fill="#111" text-anchor="start" font-weight="normal" clip-path="url(#c_desc)">ACME Ytria</text>
<text x="1169" y="297" font-size="13" fill="#111" text-anchor="start" font-weight="normal" clip-path="url(#c_owner)">[34] AADMIN1@sygx2.onmicrosoft.com</text>
<text x="1402.5" y="297" font-size="13" fill="#111" text-anchor="end" font-weight="normal" >1.50MB</text>
<text x="1522.5" y="297" font-size="13" fill="#111" text-anchor="end" font-weight="normal" >25.00TB</text>
<line x1="45" y1="333.5" x2="1525" y2="333.5" stroke="#ececec" stroke-width="1" />
<line x1="64.5" y1="306" x2="64.5" y2="333" stroke="#ececec" stroke-width="1" />
<line x1="84.5" y1="306" x2="84.5" y2="333" stroke="#ececec" stroke-width="1" />
<line x1="109.5" y1="306" x2="109.5" y2="333" stroke="#ececec" stroke-width="1" />
<line x1="133.5" y1="306" x2="133.5" y2="333" stroke="#ececec" stroke-width="1" />
<line x1="157.5" y1="306" x2="157.5" y2="333" stroke="#ececec" stroke-width="1" />
<line x1="181.5" y1="306" x2="181.5" y2="333" stroke="#ececec" stroke-width="1" />
<line x1="357.5" y1="306" x2="357.5" y2="333" stroke="#ececec" stroke-width="1" />
<line x1="613.5" y1="306" x2="613.5" y2="333" stroke="#ececec" stroke-width="1" />
<line x1="637.5" y1="306" x2="637.5" y2="333" stroke="#ececec" stroke-width="1" />
<line x1="765.5" y1="306" x2="765.5" y2="333" stroke="#ececec" stroke-width="1" />
<line x1="789.5" y1="306" x2="789.5" y2="333" stroke="#ececec" stroke-width="1" />
<line x1="869.5" y1="306" x2="869.5" y2="333" stroke="#ececec" stroke-width="1" />
<line x1="989.5" y1="306" x2="989.5" y2="333" stroke="#ececec" stroke-width="1" />
<line x1="1166.5" y1="306" x2="1166.5" y2="333" stroke="#ececec" stroke-width="1" />
<line x1="1285.5" y1="306" x2="1285.5" y2="333" stroke="#ececec" stroke-width="1" />
<line x1="1405.5" y1="306" x2="1405.5" y2="333" stroke="#ececec" stroke-width="1" />
<line x1="1525.5" y1="306" x2="1525.5" y2="333" stroke="#ececec" stroke-width="1" />
<rect x="110" y="306" width="23" height="27" fill="#d6d6d6" />
<rect x="134" y="306" width="23" height="27" fill="#d6d6d6" />
<rect x="158" y="306" width="23" height="27" fill="#d6d6d6" />
<circle cx="55" cy="319.5" r="6" fill="#fff" stroke="#777" stroke-width="1.4"/><circle cx="55" cy="319.5" r="3" fill="#a9a9a9"/>
<g fill="#2f7dc5"><circle cx="77.8" cy="315.8" r="2.3"/><path d="M74 323.3 Q74 318.5 77.8 318.5 Q82 318.5 82 322.0 Q82 323.3 80 323.3 Z"/><circle cx="72.2" cy="317.5" r="2.6" fill="#2f7dc5" stroke="#fff" stroke-width="0.8"/><path d="M68 324.5 Q68 320.1 72.2 320.1 Q76.5 320.1 76.5 324.5 Z" stroke="#fff" stroke-width="0.8"/></g>
<text x="360.5" y="325" font-size="13" fill="#111" text-anchor="start" font-weight="normal" clip-path="url(#c_email)">ade@ovh.ytria.io</text>
<text x="184.5" y="325" font-size="13" fill="#111" text-anchor="start" font-weight="normal" clip-path="url(#c_name)">ADE</text>
<rect x="614" y="306" width="23" height="27" fill="#d6d6d6" />
<text x="640.5" y="325" font-size="13" fill="#111" text-anchor="start" font-weight="normal" clip-path="url(#c_type)">Microsoft 365 group</text>
<rect x="766" y="306" width="23" height="27" fill="#f0f0f0" />
<rect x="772.5" y="313.5" width="12" height="12" fill="#fff" stroke="#b4b4b4"/><rect x="774.0" y="315" width="9" height="9" fill="none" stroke="#ececec"/>
<path d="M775.5 319.5 L777.7 322.5 L782.0 316" fill="none" stroke="#a8a8a8" stroke-width="1.5"/>
<text x="792.5" y="325" font-size="13" fill="#111" text-anchor="start" font-weight="normal" clip-path="url(#c_priv)">Private</text>
<text x="986.5" y="325" font-size="13" fill="#111" text-anchor="end" font-weight="normal" clip-path="url(#c_created)">7/11/2025 12:24 PM</text>
<text x="992.5" y="325" font-size="13" fill="#111" text-anchor="start" font-weight="normal" clip-path="url(#c_desc)">users starting with ade</text>
<rect x="1167" y="306" width="118" height="27" fill="#d6d6d6" />
<text x="1402.5" y="325" font-size="13" fill="#111" text-anchor="end" font-weight="normal" >1.34MB</text>
<text x="1522.5" y="325" font-size="13" fill="#111" text-anchor="end" font-weight="normal" >25.00TB</text>
<line x1="45" y1="361.5" x2="1525" y2="361.5" stroke="#ececec" stroke-width="1" />
<line x1="64.5" y1="334" x2="64.5" y2="361" stroke="#ececec" stroke-width="1" />
<line x1="84.5" y1="334" x2="84.5" y2="361" stroke="#ececec" stroke-width="1" />
<line x1="109.5" y1="334" x2="109.5" y2="361" stroke="#ececec" stroke-width="1" />
<line x1="133.5" y1="334" x2="133.5" y2="361" stroke="#ececec" stroke-width="1" />
<line x1="157.5" y1="334" x2="157.5" y2="361" stroke="#ececec" stroke-width="1" />
<line x1="181.5" y1="334" x2="181.5" y2="361" stroke="#ececec" stroke-width="1" />
<line x1="357.5" y1="334" x2="357.5" y2="361" stroke="#ececec" stroke-width="1" />
<line x1="613.5" y1="334" x2="613.5" y2="361" stroke="#ececec" stroke-width="1" />
<line x1="637.5" y1="334" x2="637.5" y2="361" stroke="#ececec" stroke-width="1" />
<line x1="765.5" y1="334" x2="765.5" y2="361" stroke="#ececec" stroke-width="1" />
<line x1="789.5" y1="334" x2="789.5" y2="361" stroke="#ececec" stroke-width="1" />
<line x1="869.5" y1="334" x2="869.5" y2="361" stroke="#ececec" stroke-width="1" />
<line x1="989.5" y1="334" x2="989.5" y2="361" stroke="#ececec" stroke-width="1" />
<line x1="1166.5" y1="334" x2="1166.5" y2="361" stroke="#ececec" stroke-width="1" />
<line x1="1285.5" y1="334" x2="1285.5" y2="361" stroke="#ececec" stroke-width="1" />
<line x1="1405.5" y1="334" x2="1405.5" y2="361" stroke="#ececec" stroke-width="1" />
<line x1="1525.5" y1="334" x2="1525.5" y2="361" stroke="#ececec" stroke-width="1" />
<rect x="110" y="334" width="23" height="27" fill="#d6d6d6" />
<rect x="134" y="334" width="23" height="27" fill="#d6d6d6" />
<g><rect x="161" y="340" width="14" height="14.5" rx="5" fill="#2f7fd8"/><path d="M161 347 Q161 354.5 167 354.5 Q169 350 166 347 Z" fill="#1b4f9c"/><path d="M175 347 Q175 340 169 340 Q167 344 170 347 Z" fill="#5cc0f8"/><ellipse cx="168" cy="347" rx="3.5" ry="3.2" fill="#8fd0f8"/></g><circle cx="178.5" cy="345" r="0.7" fill="#c07a2a"/>
<circle cx="55" cy="347.5" r="6" fill="#fff" stroke="#777" stroke-width="1.4"/><circle cx="55" cy="347.5" r="3" fill="#a9a9a9"/>
<g fill="#2f7dc5"><circle cx="77.8" cy="343.8" r="2.3"/><path d="M74 351.3 Q74 346.5 77.8 346.5 Q82 346.5 82 350.0 Q82 351.3 80 351.3 Z"/><circle cx="72.2" cy="345.5" r="2.6" fill="#2f7dc5" stroke="#fff" stroke-width="0.8"/><path d="M68 352.5 Q68 348.1 72.2 348.1 Q76.5 348.1 76.5 352.5 Z" stroke="#fff" stroke-width="0.8"/></g>
<text x="360.5" y="353" font-size="13" fill="#111" text-anchor="start" font-weight="normal" clip-path="url(#c_email)">allcompany@sygx2.onmicrosoft.com</text>
<text x="184.5" y="353" font-size="13" fill="#111" text-anchor="start" font-weight="normal" clip-path="url(#c_name)">All Company</text>
<rect x="614" y="334" width="23" height="27" fill="#d6d6d6" />
<text x="640.5" y="353" font-size="13" fill="#111" text-anchor="start" font-weight="normal" clip-path="url(#c_type)">Microsoft 365 group</text>
<rect x="766" y="334" width="23" height="27" fill="#f0f0f0" />
<rect x="772.5" y="341.5" width="12" height="12" fill="#fff" stroke="#b4b4b4"/><rect x="774.0" y="343" width="9" height="9" fill="none" stroke="#ececec"/>
<text x="792.5" y="353" font-size="13" fill="#111" text-anchor="start" font-weight="normal" clip-path="url(#c_priv)">Public</text>
<text x="986.5" y="353" font-size="13" fill="#111" text-anchor="end" font-weight="normal" clip-path="url(#c_created)">7/16/2024 02:38 PM</text>
<text x="992.5" y="353" font-size="13" fill="#111" text-anchor="start" font-weight="normal" clip-path="url(#c_desc)">This is the default group for everyone</text>
<text x="1169" y="353" font-size="13" fill="#111" text-anchor="start" font-weight="normal" clip-path="url(#c_owner)">AADMIN1@sygx2.onmicrosoft.com</text>
<text x="1402.5" y="353" font-size="13" fill="#111" text-anchor="end" font-weight="normal" >1.44MB</text>
<text x="1522.5" y="353" font-size="13" fill="#111" text-anchor="end" font-weight="normal" >25.00TB</text>
<line x1="45" y1="389.5" x2="1525" y2="389.5" stroke="#ececec" stroke-width="1" />
<line x1="64.5" y1="362" x2="64.5" y2="389" stroke="#ececec" stroke-width="1" />
<line x1="84.5" y1="362" x2="84.5" y2="389" stroke="#ececec" stroke-width="1" />
<line x1="109.5" y1="362" x2="109.5" y2="389" stroke="#ececec" stroke-width="1" />
<line x1="133.5" y1="362" x2="133.5" y2="389" stroke="#ececec" stroke-width="1" />
<line x1="157.5" y1="362" x2="157.5" y2="389" stroke="#ececec" stroke-width="1" />
<line x1="181.5" y1="362" x2="181.5" y2="389" stroke="#ececec" stroke-width="1" />
<line x1="357.5" y1="362" x2="357.5" y2="389" stroke="#ececec" stroke-width="1" />
<line x1="613.5" y1="362" x2="613.5" y2="389" stroke="#ececec" stroke-width="1" />
<line x1="637.5" y1="362" x2="637.5" y2="389" stroke="#ececec" stroke-width="1" />
<line x1="765.5" y1="362" x2="765.5" y2="389" stroke="#ececec" stroke-width="1" />
<line x1="789.5" y1="362" x2="789.5" y2="389" stroke="#ececec" stroke-width="1" />
<line x1="869.5" y1="362" x2="869.5" y2="389" stroke="#ececec" stroke-width="1" />
<line x1="989.5" y1="362" x2="989.5" y2="389" stroke="#ececec" stroke-width="1" />
<line x1="1166.5" y1="362" x2="1166.5" y2="389" stroke="#ececec" stroke-width="1" />
<line x1="1285.5" y1="362" x2="1285.5" y2="389" stroke="#ececec" stroke-width="1" />
<line x1="1405.5" y1="362" x2="1405.5" y2="389" stroke="#ececec" stroke-width="1" />
<line x1="1525.5" y1="362" x2="1525.5" y2="389" stroke="#ececec" stroke-width="1" />
<rect x="110" y="362" width="23" height="27" fill="#d6d6d6" />
<rect x="134" y="362" width="23" height="27" fill="#d6d6d6" />
<rect x="158" y="362" width="23" height="27" fill="#d6d6d6" />
<g fill="#2f7dc5"><circle cx="77.8" cy="371.8" r="2.3"/><path d="M74 379.3 Q74 374.5 77.8 374.5 Q82 374.5 82 378.0 Q82 379.3 80 379.3 Z"/><circle cx="72.2" cy="373.5" r="2.6" fill="#2f7dc5" stroke="#fff" stroke-width="0.8"/><path d="M68 380.5 Q68 376.1 72.2 376.1 Q76.5 376.1 76.5 380.5 Z" stroke="#fff" stroke-width="0.8"/></g>
<rect x="358" y="362" width="255" height="27" fill="#d6d6d6" />
<text x="184.5" y="381" font-size="13" fill="#111" text-anchor="start" font-weight="normal" clip-path="url(#c_name)">Android devices</text>
<rect x="614" y="362" width="23" height="27" fill="#d6d6d6" />
<text x="640.5" y="381" font-size="13" fill="#111" text-anchor="start" font-weight="normal" clip-path="url(#c_type)">Security Group</text>
<rect x="766" y="362" width="23" height="27" fill="#f0f0f0" />
<rect x="772.5" y="369.5" width="12" height="12" fill="#fff" stroke="#b4b4b4"/><rect x="774.0" y="371" width="9" height="9" fill="none" stroke="#ececec"/>
<rect x="790" y="362" width="79" height="27" fill="#d6d6d6" />
<text x="986.5" y="381" font-size="13" fill="#111" text-anchor="end" font-weight="normal" clip-path="url(#c_created)">10/1/2025 05:26 PM</text>
<text x="992.5" y="381" font-size="13" fill="#111" text-anchor="start" font-weight="normal" clip-path="url(#c_desc)">Android devices</text>
<text x="1169" y="381" font-size="13" fill="#111" text-anchor="start" font-weight="normal" clip-path="url(#c_owner)">AADMIN1@sygx2.onmicrosoft.com</text>
<rect x="1286" y="362" width="119" height="27" fill="#d6d6d6" />
<rect x="1406" y="362" width="119" height="27" fill="#d6d6d6" />
<line x1="45" y1="417.5" x2="1525" y2="417.5" stroke="#ececec" stroke-width="1" />
<line x1="64.5" y1="390" x2="64.5" y2="417" stroke="#ececec" stroke-width="1" />
<line x1="84.5" y1="390" x2="84.5" y2="417" stroke="#ececec" stroke-width="1" />
<line x1="109.5" y1="390" x2="109.5" y2="417" stroke="#ececec" stroke-width="1" />
<line x1="133.5" y1="390" x2="133.5" y2="417" stroke="#ececec" stroke-width="1" />
<line x1="157.5" y1="390" x2="157.5" y2="417" stroke="#ececec" stroke-width="1" />
<line x1="181.5" y1="390" x2="181.5" y2="417" stroke="#ececec" stroke-width="1" />
<line x1="357.5" y1="390" x2="357.5" y2="417" stroke="#ececec" stroke-width="1" />
<line x1="613.5" y1="390" x2="613.5" y2="417" stroke="#ececec" stroke-width="1" />
<line x1="637.5" y1="390" x2="637.5" y2="417" stroke="#ececec" stroke-width="1" />
<line x1="765.5" y1="390" x2="765.5" y2="417" stroke="#ececec" stroke-width="1" />
<line x1="789.5" y1="390" x2="789.5" y2="417" stroke="#ececec" stroke-width="1" />
<line x1="869.5" y1="390" x2="869.5" y2="417" stroke="#ececec" stroke-width="1" />
<line x1="989.5" y1="390" x2="989.5" y2="417" stroke="#ececec" stroke-width="1" />
<line x1="1166.5" y1="390" x2="1166.5" y2="417" stroke="#ececec" stroke-width="1" />
<line x1="1285.5" y1="390" x2="1285.5" y2="417" stroke="#ececec" stroke-width="1" />
<line x1="1405.5" y1="390" x2="1405.5" y2="417" stroke="#ececec" stroke-width="1" />
<line x1="1525.5" y1="390" x2="1525.5" y2="417" stroke="#ececec" stroke-width="1" />
<rect x="110" y="390" width="23" height="27" fill="#d6d6d6" />
<rect x="134" y="390" width="23" height="27" fill="#d6d6d6" />
<rect x="158" y="390" width="23" height="27" fill="#d6d6d6" />
<g fill="#2f7dc5"><circle cx="77.8" cy="399.8" r="2.3"/><path d="M74 407.3 Q74 402.5 77.8 402.5 Q82 402.5 82 406.0 Q82 407.3 80 407.3 Z"/><circle cx="72.2" cy="401.5" r="2.6" fill="#2f7dc5" stroke="#fff" stroke-width="0.8"/><path d="M68 408.5 Q68 404.1 72.2 404.1 Q76.5 404.1 76.5 408.5 Z" stroke="#fff" stroke-width="0.8"/></g>
<rect x="358" y="390" width="255" height="27" fill="#d6d6d6" />
<text x="184.5" y="409" font-size="13" fill="#111" text-anchor="start" font-weight="normal" clip-path="url(#c_name)">Attribute admins</text>
<rect x="614" y="390" width="23" height="27" fill="#d6d6d6" />
<text x="640.5" y="409" font-size="13" fill="#111" text-anchor="start" font-weight="normal" clip-path="url(#c_type)">Security Group</text>
<rect x="766" y="390" width="23" height="27" fill="#f0f0f0" />
<rect x="772.5" y="397.5" width="12" height="12" fill="#fff" stroke="#b4b4b4"/><rect x="774.0" y="399" width="9" height="9" fill="none" stroke="#ececec"/>
<text x="792.5" y="409" font-size="13" fill="#111" text-anchor="start" font-weight="normal" clip-path="url(#c_priv)">Private</text>
<text x="986.5" y="409" font-size="13" fill="#111" text-anchor="end" font-weight="normal" clip-path="url(#c_created)">1/14/2025 12:59 PM</text>
<text x="992.5" y="409" font-size="13" fill="#111" text-anchor="start" font-weight="normal" clip-path="url(#c_desc)">Group PIM - Manage custom attributes</text>
<text x="1169" y="409" font-size="13" fill="#111" text-anchor="start" font-weight="normal" clip-path="url(#c_owner)">AADMIN1@sygx2.onmicrosoft.com</text>
<rect x="1286" y="390" width="119" height="27" fill="#d6d6d6" />
<rect x="1406" y="390" width="119" height="27" fill="#d6d6d6" />
<line x1="45" y1="445.5" x2="1525" y2="445.5" stroke="#ececec" stroke-width="1" />
<line x1="64.5" y1="418" x2="64.5" y2="445" stroke="#ececec" stroke-width="1" />
<line x1="84.5" y1="418" x2="84.5" y2="445" stroke="#ececec" stroke-width="1" />
<line x1="109.5" y1="418" x2="109.5" y2="445" stroke="#ececec" stroke-width="1" />
<line x1="133.5" y1="418" x2="133.5" y2="445" stroke="#ececec" stroke-width="1" />
<line x1="157.5" y1="418" x2="157.5" y2="445" stroke="#ececec" stroke-width="1" />
<line x1="181.5" y1="418" x2="181.5" y2="445" stroke="#ececec" stroke-width="1" />
<line x1="357.5" y1="418" x2="357.5" y2="445" stroke="#ececec" stroke-width="1" />
<line x1="613.5" y1="418" x2="613.5" y2="445" stroke="#ececec" stroke-width="1" />
<line x1="637.5" y1="418" x2="637.5" y2="445" stroke="#ececec" stroke-width="1" />
<line x1="765.5" y1="418" x2="765.5" y2="445" stroke="#ececec" stroke-width="1" />
<line x1="789.5" y1="418" x2="789.5" y2="445" stroke="#ececec" stroke-width="1" />
<line x1="869.5" y1="418" x2="869.5" y2="445" stroke="#ececec" stroke-width="1" />
<line x1="989.5" y1="418" x2="989.5" y2="445" stroke="#ececec" stroke-width="1" />
<line x1="1166.5" y1="418" x2="1166.5" y2="445" stroke="#ececec" stroke-width="1" />
<line x1="1285.5" y1="418" x2="1285.5" y2="445" stroke="#ececec" stroke-width="1" />
<line x1="1405.5" y1="418" x2="1405.5" y2="445" stroke="#ececec" stroke-width="1" />
<line x1="1525.5" y1="418" x2="1525.5" y2="445" stroke="#ececec" stroke-width="1" />
<rect x="110" y="418" width="23" height="27" fill="#d6d6d6" />
<rect x="134" y="418" width="23" height="27" fill="#d6d6d6" />
<rect x="158" y="418" width="23" height="27" fill="#d6d6d6" />
<circle cx="55" cy="431.5" r="6" fill="#fff" stroke="#777" stroke-width="1.4"/><circle cx="55" cy="431.5" r="3" fill="#a9a9a9"/>
<g fill="#2f7dc5"><circle cx="77.8" cy="427.8" r="2.3"/><path d="M74 435.3 Q74 430.5 77.8 430.5 Q82 430.5 82 434.0 Q82 435.3 80 435.3 Z"/><circle cx="72.2" cy="429.5" r="2.6" fill="#2f7dc5" stroke="#fff" stroke-width="0.8"/><path d="M68 436.5 Q68 432.1 72.2 432.1 Q76.5 432.1 76.5 436.5 Z" stroke="#fff" stroke-width="0.8"/></g>
<text x="360.5" y="437" font-size="13" fill="#111" text-anchor="start" font-weight="normal" clip-path="url(#c_email)">auth-test@sygx2.onmicrosoft.com</text>
<text x="184.5" y="437" font-size="13" fill="#111" text-anchor="start" font-weight="normal" clip-path="url(#c_name)">Auth Test Group</text>
<rect x="614" y="418" width="23" height="27" fill="#d6d6d6" />
<text x="640.5" y="437" font-size="13" fill="#111" text-anchor="start" font-weight="normal" clip-path="url(#c_type)">Microsoft 365 group</text>
<rect x="766" y="418" width="23" height="27" fill="#f0f0f0" />
<rect x="772.5" y="425.5" width="12" height="12" fill="#fff" stroke="#b4b4b4"/><rect x="774.0" y="427" width="9" height="9" fill="none" stroke="#ececec"/>
<text x="792.5" y="437" font-size="13" fill="#111" text-anchor="start" font-weight="normal" clip-path="url(#c_priv)">Private</text>
<text x="986.5" y="437" font-size="13" fill="#111" text-anchor="end" font-weight="normal" clip-path="url(#c_created)">5/21/2025 02:18 PM</text>
<text x="992.5" y="437" font-size="13" fill="#111" text-anchor="start" font-weight="normal" clip-path="url(#c_desc)">test authentication methods config</text>
<rect x="1167" y="418" width="118" height="27" fill="#d6d6d6" />
<text x="1402.5" y="437" font-size="13" fill="#111" text-anchor="end" font-weight="normal" >1.34MB</text>
<text x="1522.5" y="437" font-size="13" fill="#111" text-anchor="end" font-weight="normal" >25.00TB</text>
<line x1="45" y1="473.5" x2="1525" y2="473.5" stroke="#ececec" stroke-width="1" />
<line x1="64.5" y1="446" x2="64.5" y2="473" stroke="#ececec" stroke-width="1" />
<line x1="84.5" y1="446" x2="84.5" y2="473" stroke="#ececec" stroke-width="1" />
<line x1="109.5" y1="446" x2="109.5" y2="473" stroke="#ececec" stroke-width="1" />
<line x1="133.5" y1="446" x2="133.5" y2="473" stroke="#ececec" stroke-width="1" />
<line x1="157.5" y1="446" x2="157.5" y2="473" stroke="#ececec" stroke-width="1" />
<line x1="181.5" y1="446" x2="181.5" y2="473" stroke="#ececec" stroke-width="1" />
<line x1="357.5" y1="446" x2="357.5" y2="473" stroke="#ececec" stroke-width="1" />
<line x1="613.5" y1="446" x2="613.5" y2="473" stroke="#ececec" stroke-width="1" />
<line x1="637.5" y1="446" x2="637.5" y2="473" stroke="#ececec" stroke-width="1" />
<line x1="765.5" y1="446" x2="765.5" y2="473" stroke="#ececec" stroke-width="1" />
<line x1="789.5" y1="446" x2="789.5" y2="473" stroke="#ececec" stroke-width="1" />
<line x1="869.5" y1="446" x2="869.5" y2="473" stroke="#ececec" stroke-width="1" />
<line x1="989.5" y1="446" x2="989.5" y2="473" stroke="#ececec" stroke-width="1" />
<line x1="1166.5" y1="446" x2="1166.5" y2="473" stroke="#ececec" stroke-width="1" />
<line x1="1285.5" y1="446" x2="1285.5" y2="473" stroke="#ececec" stroke-width="1" />
<line x1="1405.5" y1="446" x2="1405.5" y2="473" stroke="#ececec" stroke-width="1" />
<line x1="1525.5" y1="446" x2="1525.5" y2="473" stroke="#ececec" stroke-width="1" />
<rect x="110" y="446" width="23" height="27" fill="#d6d6d6" />
<g fill="#8b57a8"><circle cx="141.7" cy="454.3" r="2.2"/><circle cx="148" cy="454" r="1.7"/><path d="M138 457.5 H145.5 V463 Q145.5 466 141.7 466 Q138 466 138 463 Z"/><path d="M146.5 457.5 H150.5 V461 Q150.5 463.5 146.5 463.5 Z"/></g><circle cx="154.5" cy="456" r="0.7" fill="#b04a3a"/>
<rect x="158" y="446" width="23" height="27" fill="#d6d6d6" />
<circle cx="55" cy="459.5" r="6" fill="#fff" stroke="#777" stroke-width="1.4"/><circle cx="55" cy="459.5" r="3" fill="#a9a9a9"/>
<g fill="#2f7dc5"><circle cx="77.8" cy="455.8" r="2.3"/><path d="M74 463.3 Q74 458.5 77.8 458.5 Q82 458.5 82 462.0 Q82 463.3 80 463.3 Z"/><circle cx="72.2" cy="457.5" r="2.6" fill="#2f7dc5" stroke="#fff" stroke-width="0.8"/><path d="M68 464.5 Q68 460.1 72.2 460.1 Q76.5 460.1 76.5 464.5 Z" stroke="#fff" stroke-width="0.8"/></g>
<text x="360.5" y="465" font-size="13" fill="#111" text-anchor="start" font-weight="normal" clip-path="url(#c_email)">bp@ovh.ytria.io</text>
<text x="184.5" y="465" font-size="13" fill="#111" text-anchor="start" font-weight="normal" clip-path="url(#c_name)">Black pebble</text>
<rect x="614" y="446" width="23" height="27" fill="#d6d6d6" />
<text x="640.5" y="465" font-size="13" fill="#111" text-anchor="start" font-weight="normal" clip-path="url(#c_type)">Microsoft 365 group</text>
<rect x="766" y="446" width="23" height="27" fill="#f0f0f0" />
<rect x="772.5" y="453.5" width="12" height="12" fill="#fff" stroke="#b4b4b4"/><rect x="774.0" y="455" width="9" height="9" fill="none" stroke="#ececec"/>
<text x="792.5" y="465" font-size="13" fill="#111" text-anchor="start" font-weight="normal" clip-path="url(#c_priv)">HiddenMembership</text>
<text x="986.5" y="465" font-size="13" fill="#111" text-anchor="end" font-weight="normal" clip-path="url(#c_created)">1/24/2025 05:56 PM</text>
<text x="992.5" y="465" font-size="13" fill="#111" text-anchor="start" font-weight="normal" clip-path="url(#c_desc)">Black pebbles A</text>
<text x="1169" y="465" font-size="13" fill="#111" text-anchor="start" font-weight="normal" clip-path="url(#c_owner)">AADMIN1@sygx2.onmicrosoft.com</text>
<text x="1402.5" y="465" font-size="13" fill="#111" text-anchor="end" font-weight="normal" >11.67GB</text>
<text x="1522.5" y="465" font-size="13" fill="#111" text-anchor="end" font-weight="normal" >24.99TB</text>
<line x1="45" y1="501.5" x2="1525" y2="501.5" stroke="#ececec" stroke-width="1" />
<line x1="64.5" y1="474" x2="64.5" y2="501" stroke="#ececec" stroke-width="1" />
<line x1="84.5" y1="474" x2="84.5" y2="501" stroke="#ececec" stroke-width="1" />
<line x1="109.5" y1="474" x2="109.5" y2="501" stroke="#ececec" stroke-width="1" />
<line x1="133.5" y1="474" x2="133.5" y2="501" stroke="#ececec" stroke-width="1" />
<line x1="157.5" y1="474" x2="157.5" y2="501" stroke="#ececec" stroke-width="1" />
<line x1="181.5" y1="474" x2="181.5" y2="501" stroke="#ececec" stroke-width="1" />
<line x1="357.5" y1="474" x2="357.5" y2="501" stroke="#ececec" stroke-width="1" />
<line x1="613.5" y1="474" x2="613.5" y2="501" stroke="#ececec" stroke-width="1" />
<line x1="637.5" y1="474" x2="637.5" y2="501" stroke="#ececec" stroke-width="1" />
<line x1="765.5" y1="474" x2="765.5" y2="501" stroke="#ececec" stroke-width="1" />
<line x1="789.5" y1="474" x2="789.5" y2="501" stroke="#ececec" stroke-width="1" />
<line x1="869.5" y1="474" x2="869.5" y2="501" stroke="#ececec" stroke-width="1" />
<line x1="989.5" y1="474" x2="989.5" y2="501" stroke="#ececec" stroke-width="1" />
<line x1="1166.5" y1="474" x2="1166.5" y2="501" stroke="#ececec" stroke-width="1" />
<line x1="1285.5" y1="474" x2="1285.5" y2="501" stroke="#ececec" stroke-width="1" />
<line x1="1405.5" y1="474" x2="1405.5" y2="501" stroke="#ececec" stroke-width="1" />
<line x1="1525.5" y1="474" x2="1525.5" y2="501" stroke="#ececec" stroke-width="1" />
<rect x="110" y="474" width="23" height="27" fill="#d6d6d6" />
<rect x="134" y="474" width="23" height="27" fill="#d6d6d6" />
<rect x="158" y="474" width="23" height="27" fill="#d6d6d6" />
<circle cx="55" cy="487.5" r="6" fill="#fff" stroke="#777" stroke-width="1.4"/><circle cx="55" cy="487.5" r="3" fill="#a9a9a9"/>
<g fill="#2f7dc5"><circle cx="77.8" cy="483.8" r="2.3"/><path d="M74 491.3 Q74 486.5 77.8 486.5 Q82 486.5 82 490.0 Q82 491.3 80 491.3 Z"/><circle cx="72.2" cy="485.5" r="2.6" fill="#2f7dc5" stroke="#fff" stroke-width="0.8"/><path d="M68 492.5 Q68 488.1 72.2 488.1 Q76.5 488.1 76.5 492.5 Z" stroke="#fff" stroke-width="0.8"/></g>
<text x="360.5" y="493" font-size="13" fill="#111" text-anchor="start" font-weight="normal" clip-path="url(#c_email)">building-security@sygx2.onmicrosoft.com</text>
<text x="184.5" y="493" font-size="13" fill="#111" text-anchor="start" font-weight="normal" clip-path="url(#c_name)">Building security</text>
<rect x="614" y="474" width="23" height="27" fill="#d6d6d6" />
<text x="640.5" y="493" font-size="13" fill="#111" text-anchor="start" font-weight="normal" clip-path="url(#c_type)">Mail-enabled security</text>
<rect x="766" y="474" width="23" height="27" fill="#f0f0f0" />
<rect x="772.5" y="481.5" width="12" height="12" fill="#fff" stroke="#b4b4b4"/><rect x="774.0" y="483" width="9" height="9" fill="none" stroke="#ececec"/>
<rect x="790" y="474" width="79" height="27" fill="#d6d6d6" />
<text x="986.5" y="493" font-size="13" fill="#111" text-anchor="end" font-weight="normal" clip-path="url(#c_created)">3/19/2025 01:27 PM</text>
<rect x="990" y="474" width="176" height="27" fill="#d6d6d6" />
<text x="1169" y="493" font-size="13" fill="#111" text-anchor="start" font-weight="normal" clip-path="url(#c_owner)">[2] AADMIN1@sygx2.onmicrosoft.com</text>
<rect x="1286" y="474" width="119" height="27" fill="#d6d6d6" />
<rect x="1406" y="474" width="119" height="27" fill="#d6d6d6" />
<line x1="45" y1="529.5" x2="1525" y2="529.5" stroke="#ececec" stroke-width="1" />
<line x1="64.5" y1="502" x2="64.5" y2="529" stroke="#ececec" stroke-width="1" />
<line x1="84.5" y1="502" x2="84.5" y2="529" stroke="#ececec" stroke-width="1" />
<line x1="109.5" y1="502" x2="109.5" y2="529" stroke="#ececec" stroke-width="1" />
<line x1="133.5" y1="502" x2="133.5" y2="529" stroke="#ececec" stroke-width="1" />
<line x1="157.5" y1="502" x2="157.5" y2="529" stroke="#ececec" stroke-width="1" />
<line x1="181.5" y1="502" x2="181.5" y2="529" stroke="#ececec" stroke-width="1" />
<line x1="357.5" y1="502" x2="357.5" y2="529" stroke="#ececec" stroke-width="1" />
<line x1="613.5" y1="502" x2="613.5" y2="529" stroke="#ececec" stroke-width="1" />
<line x1="637.5" y1="502" x2="637.5" y2="529" stroke="#ececec" stroke-width="1" />
<line x1="765.5" y1="502" x2="765.5" y2="529" stroke="#ececec" stroke-width="1" />
<line x1="789.5" y1="502" x2="789.5" y2="529" stroke="#ececec" stroke-width="1" />
<line x1="869.5" y1="502" x2="869.5" y2="529" stroke="#ececec" stroke-width="1" />
<line x1="989.5" y1="502" x2="989.5" y2="529" stroke="#ececec" stroke-width="1" />
<line x1="1166.5" y1="502" x2="1166.5" y2="529" stroke="#ececec" stroke-width="1" />
<line x1="1285.5" y1="502" x2="1285.5" y2="529" stroke="#ececec" stroke-width="1" />
<line x1="1405.5" y1="502" x2="1405.5" y2="529" stroke="#ececec" stroke-width="1" />
<line x1="1525.5" y1="502" x2="1525.5" y2="529" stroke="#ececec" stroke-width="1" />
<rect x="110" y="502" width="23" height="27" fill="#d6d6d6" />
<rect x="134" y="502" width="23" height="27" fill="#d6d6d6" />
<rect x="158" y="502" width="23" height="27" fill="#d6d6d6" />
<g fill="#2f7dc5"><circle cx="77.8" cy="511.8" r="2.3"/><path d="M74 519.3 Q74 514.5 77.8 514.5 Q82 514.5 82 518.0 Q82 519.3 80 519.3 Z"/><circle cx="72.2" cy="513.5" r="2.6" fill="#2f7dc5" stroke="#fff" stroke-width="0.8"/><path d="M68 520.5 Q68 516.1 72.2 516.1 Q76.5 516.1 76.5 520.5 Z" stroke="#fff" stroke-width="0.8"/></g>
<text x="360.5" y="521" font-size="13" fill="#111" text-anchor="start" font-weight="normal" clip-path="url(#c_email)">C-level@sygx2.onmicrosoft.com</text>
<text x="184.5" y="521" font-size="13" fill="#111" text-anchor="start" font-weight="normal" clip-path="url(#c_name)">C-level</text>
<rect x="614" y="502" width="23" height="27" fill="#f0f0f0" />
<rect x="620.5" y="509.5" width="12" height="12" fill="#fff" stroke="#b4b4b4"/><rect x="622.0" y="511" width="9" height="9" fill="none" stroke="#ececec"/>
<path d="M623.5 515.5 L625.7 518.5 L630.0 512" fill="none" stroke="#a8a8a8" stroke-width="1.5"/>
<text x="640.5" y="521" font-size="13" fill="#111" text-anchor="start" font-weight="normal" clip-path="url(#c_type)">Mail-enabled security</text>
<rect x="766" y="502" width="23" height="27" fill="#f0f0f0" />
<rect x="772.5" y="509.5" width="12" height="12" fill="#fff" stroke="#b4b4b4"/><rect x="774.0" y="511" width="9" height="9" fill="none" stroke="#ececec"/>
<rect x="790" y="502" width="79" height="27" fill="#d6d6d6" />
<text x="986.5" y="521" font-size="13" fill="#111" text-anchor="end" font-weight="normal" clip-path="url(#c_created)">0/10/2024 09:08 PM</text>
<rect x="990" y="502" width="176" height="27" fill="#d6d6d6" />
<text x="1169" y="521" font-size="13" fill="#111" text-anchor="start" font-weight="normal" clip-path="url(#c_owner)">Kaylyn.Maxwell@sygx2.onmicrosoft.com</text>
<rect x="1286" y="502" width="119" height="27" fill="#d6d6d6" />
<rect x="1406" y="502" width="119" height="27" fill="#d6d6d6" />
<line x1="45" y1="557.5" x2="1525" y2="557.5" stroke="#ececec" stroke-width="1" />
<line x1="64.5" y1="530" x2="64.5" y2="557" stroke="#ececec" stroke-width="1" />
<line x1="84.5" y1="530" x2="84.5" y2="557" stroke="#ececec" stroke-width="1" />
<line x1="109.5" y1="530" x2="109.5" y2="557" stroke="#ececec" stroke-width="1" />
<line x1="133.5" y1="530" x2="133.5" y2="557" stroke="#ececec" stroke-width="1" />
<line x1="157.5" y1="530" x2="157.5" y2="557" stroke="#ececec" stroke-width="1" />
<line x1="181.5" y1="530" x2="181.5" y2="557" stroke="#ececec" stroke-width="1" />
<line x1="357.5" y1="530" x2="357.5" y2="557" stroke="#ececec" stroke-width="1" />
<line x1="613.5" y1="530" x2="613.5" y2="557" stroke="#ececec" stroke-width="1" />
<line x1="637.5" y1="530" x2="637.5" y2="557" stroke="#ececec" stroke-width="1" />
<line x1="765.5" y1="530" x2="765.5" y2="557" stroke="#ececec" stroke-width="1" />
<line x1="789.5" y1="530" x2="789.5" y2="557" stroke="#ececec" stroke-width="1" />
<line x1="869.5" y1="530" x2="869.5" y2="557" stroke="#ececec" stroke-width="1" />
<line x1="989.5" y1="530" x2="989.5" y2="557" stroke="#ececec" stroke-width="1" />
<line x1="1166.5" y1="530" x2="1166.5" y2="557" stroke="#ececec" stroke-width="1" />
<line x1="1285.5" y1="530" x2="1285.5" y2="557" stroke="#ececec" stroke-width="1" />
<line x1="1405.5" y1="530" x2="1405.5" y2="557" stroke="#ececec" stroke-width="1" />
<line x1="1525.5" y1="530" x2="1525.5" y2="557" stroke="#ececec" stroke-width="1" />
<rect x="110" y="530" width="23" height="27" fill="#d6d6d6" />
<rect x="134" y="530" width="23" height="27" fill="#d6d6d6" />
<rect x="158" y="530" width="23" height="27" fill="#d6d6d6" />
<circle cx="55" cy="543.5" r="6" fill="#fff" stroke="#777" stroke-width="1.4"/><circle cx="55" cy="543.5" r="3" fill="#a9a9a9"/>
<g fill="#2f7dc5"><circle cx="77.8" cy="539.8" r="2.3"/><path d="M74 547.3 Q74 542.5 77.8 542.5 Q82 542.5 82 546.0 Q82 547.3 80 547.3 Z"/><circle cx="72.2" cy="541.5" r="2.6" fill="#2f7dc5" stroke="#fff" stroke-width="0.8"/><path d="M68 548.5 Q68 544.1 72.2 544.1 Q76.5 544.1 76.5 548.5 Z" stroke="#fff" stroke-width="0.8"/></g>
<text x="360.5" y="549" font-size="13" fill="#111" text-anchor="start" font-weight="normal" clip-path="url(#c_email)">cheeringcommunity@ovh.ytria.io</text>
<text x="184.5" y="549" font-size="13" fill="#111" text-anchor="start" font-weight="normal" clip-path="url(#c_name)">Cheering community</text>
<rect x="614" y="530" width="23" height="27" fill="#d6d6d6" />
<text x="640.5" y="549" font-size="13" fill="#111" text-anchor="start" font-weight="normal" clip-path="url(#c_type)">Microsoft 365 group</text>
<rect x="766" y="530" width="23" height="27" fill="#f0f0f0" />
<rect x="772.5" y="537.5" width="12" height="12" fill="#fff" stroke="#b4b4b4"/><rect x="774.0" y="539" width="9" height="9" fill="none" stroke="#ececec"/>
<text x="792.5" y="549" font-size="13" fill="#111" text-anchor="start" font-weight="normal" clip-path="url(#c_priv)">Public</text>
<text x="986.5" y="549" font-size="13" fill="#111" text-anchor="end" font-weight="normal" clip-path="url(#c_created)">1/18/2025 12:55 PM</text>
<text x="992.5" y="549" font-size="13" fill="#111" text-anchor="start" font-weight="normal" clip-path="url(#c_desc)">positive insight only</text>
<text x="1169" y="549" font-size="13" fill="#111" text-anchor="start" font-weight="normal" clip-path="url(#c_owner)">AADMIN1@sygx2.onmicrosoft.com</text>
<text x="1402.5" y="549" font-size="13" fill="#111" text-anchor="end" font-weight="normal" >1.34MB</text>
<text x="1522.5" y="549" font-size="13" fill="#111" text-anchor="end" font-weight="normal" >25.00TB</text>
<line x1="45" y1="585.5" x2="1525" y2="585.5" stroke="#ececec" stroke-width="1" />
<line x1="64.5" y1="558" x2="64.5" y2="585" stroke="#ececec" stroke-width="1" />
<line x1="84.5" y1="558" x2="84.5" y2="585" stroke="#ececec" stroke-width="1" />
<line x1="109.5" y1="558" x2="109.5" y2="585" stroke="#ececec" stroke-width="1" />
<line x1="133.5" y1="558" x2="133.5" y2="585" stroke="#ececec" stroke-width="1" />
<line x1="157.5" y1="558" x2="157.5" y2="585" stroke="#ececec" stroke-width="1" />
<line x1="181.5" y1="558" x2="181.5" y2="585" stroke="#ececec" stroke-width="1" />
<line x1="357.5" y1="558" x2="357.5" y2="585" stroke="#ececec" stroke-width="1" />
<line x1="613.5" y1="558" x2="613.5" y2="585" stroke="#ececec" stroke-width="1" />
<line x1="637.5" y1="558" x2="637.5" y2="585" stroke="#ececec" stroke-width="1" />
<line x1="765.5" y1="558" x2="765.5" y2="585" stroke="#ececec" stroke-width="1" />
<line x1="789.5" y1="558" x2="789.5" y2="585" stroke="#ececec" stroke-width="1" />
<line x1="869.5" y1="558" x2="869.5" y2="585" stroke="#ececec" stroke-width="1" />
<line x1="989.5" y1="558" x2="989.5" y2="585" stroke="#ececec" stroke-width="1" />
<line x1="1166.5" y1="558" x2="1166.5" y2="585" stroke="#ececec" stroke-width="1" />
<line x1="1285.5" y1="558" x2="1285.5" y2="585" stroke="#ececec" stroke-width="1" />
<line x1="1405.5" y1="558" x2="1405.5" y2="585" stroke="#ececec" stroke-width="1" />
<line x1="1525.5" y1="558" x2="1525.5" y2="585" stroke="#ececec" stroke-width="1" />
<rect x="110" y="558" width="23" height="27" fill="#d6d6d6" />
<rect x="134" y="558" width="23" height="27" fill="#d6d6d6" />
<rect x="158" y="558" width="23" height="27" fill="#d6d6d6" />
<g fill="#2f7dc5"><circle cx="77.8" cy="567.8" r="2.3"/><path d="M74 575.3 Q74 570.5 77.8 570.5 Q82 570.5 82 574.0 Q82 575.3 80 575.3 Z"/><circle cx="72.2" cy="569.5" r="2.6" fill="#2f7dc5" stroke="#fff" stroke-width="0.8"/><path d="M68 576.5 Q68 572.1 72.2 572.1 Q76.5 572.1 76.5 576.5 Z" stroke="#fff" stroke-width="0.8"/></g>
<rect x="358" y="558" width="255" height="27" fill="#d6d6d6" />
<text x="184.5" y="577" font-size="13" fill="#111" text-anchor="start" font-weight="normal" clip-path="url(#c_name)">CircularSec</text>
<rect x="614" y="558" width="23" height="27" fill="#f0f0f0" />
<rect x="620.5" y="565.5" width="12" height="12" fill="#fff" stroke="#b4b4b4"/><rect x="622.0" y="567" width="9" height="9" fill="none" stroke="#ececec"/>
<path d="M623.5 571.5 L625.7 574.5 L630.0 568" fill="none" stroke="#a8a8a8" stroke-width="1.5"/>
<text x="640.5" y="577" font-size="13" fill="#111" text-anchor="start" font-weight="normal" clip-path="url(#c_type)">Security Group</text>
<rect x="766" y="558" width="23" height="27" fill="#f0f0f0" />
<rect x="772.5" y="565.5" width="12" height="12" fill="#fff" stroke="#b4b4b4"/><rect x="774.0" y="567" width="9" height="9" fill="none" stroke="#ececec"/>
<rect x="790" y="558" width="79" height="27" fill="#d6d6d6" />
<text x="986.5" y="577" font-size="13" fill="#111" text-anchor="end" font-weight="normal" clip-path="url(#c_created)">0/10/2024 09:08 PM</text>
<text x="992.5" y="577" font-size="13" fill="#111" text-anchor="start" font-weight="normal" clip-path="url(#c_desc)">Nested groups, synced</text>
<rect x="1167" y="558" width="118" height="27" fill="#d6d6d6" />
<rect x="1286" y="558" width="119" height="27" fill="#d6d6d6" />
<rect x="1406" y="558" width="119" height="27" fill="#d6d6d6" />
<line x1="45" y1="613.5" x2="1525" y2="613.5" stroke="#ececec" stroke-width="1" />
<line x1="64.5" y1="586" x2="64.5" y2="613" stroke="#ececec" stroke-width="1" />
<line x1="84.5" y1="586" x2="84.5" y2="613" stroke="#ececec" stroke-width="1" />
<line x1="109.5" y1="586" x2="109.5" y2="613" stroke="#ececec" stroke-width="1" />
<line x1="133.5" y1="586" x2="133.5" y2="613" stroke="#ececec" stroke-width="1" />
<line x1="157.5" y1="586" x2="157.5" y2="613" stroke="#ececec" stroke-width="1" />
<line x1="181.5" y1="586" x2="181.5" y2="613" stroke="#ececec" stroke-width="1" />
<line x1="357.5" y1="586" x2="357.5" y2="613" stroke="#ececec" stroke-width="1" />
<line x1="613.5" y1="586" x2="613.5" y2="613" stroke="#ececec" stroke-width="1" />
<line x1="637.5" y1="586" x2="637.5" y2="613" stroke="#ececec" stroke-width="1" />
<line x1="765.5" y1="586" x2="765.5" y2="613" stroke="#ececec" stroke-width="1" />
<line x1="789.5" y1="586" x2="789.5" y2="613" stroke="#ececec" stroke-width="1" />
<line x1="869.5" y1="586" x2="869.5" y2="613" stroke="#ececec" stroke-width="1" />
<line x1="989.5" y1="586" x2="989.5" y2="613" stroke="#ececec" stroke-width="1" />
<line x1="1166.5" y1="586" x2="1166.5" y2="613" stroke="#ececec" stroke-width="1" />
<line x1="1285.5" y1="586" x2="1285.5" y2="613" stroke="#ececec" stroke-width="1" />
<line x1="1405.5" y1="586" x2="1405.5" y2="613" stroke="#ececec" stroke-width="1" />
<line x1="1525.5" y1="586" x2="1525.5" y2="613" stroke="#ececec" stroke-width="1" />
<rect x="110" y="586" width="23" height="27" fill="#d6d6d6" />
<rect x="134" y="586" width="23" height="27" fill="#d6d6d6" />
<rect x="158" y="586" width="23" height="27" fill="#d6d6d6" />
<g fill="#2f7dc5"><circle cx="77.8" cy="595.8" r="2.3"/><path d="M74 603.3 Q74 598.5 77.8 598.5 Q82 598.5 82 602.0 Q82 603.3 80 603.3 Z"/><circle cx="72.2" cy="597.5" r="2.6" fill="#2f7dc5" stroke="#fff" stroke-width="0.8"/><path d="M68 604.5 Q68 600.1 72.2 600.1 Q76.5 600.1 76.5 604.5 Z" stroke="#fff" stroke-width="0.8"/></g>
<text x="360.5" y="605" font-size="13" fill="#111" text-anchor="start" font-weight="normal" clip-path="url(#c_email)">companynew@sygx2.onmicrosoft.com</text>
<text x="184.5" y="605" font-size="13" fill="#111" text-anchor="start" font-weight="normal" clip-path="url(#c_name)">Company newsletter!</text>
<rect x="614" y="586" width="23" height="27" fill="#f0f0f0" />
<rect x="620.5" y="593.5" width="12" height="12" fill="#fff" stroke="#b4b4b4"/><rect x="622.0" y="595" width="9" height="9" fill="none" stroke="#ececec"/>
<path d="M623.5 599.5 L625.7 602.5 L630.0 596" fill="none" stroke="#a8a8a8" stroke-width="1.5"/>
<text x="640.5" y="605" font-size="13" fill="#111" text-anchor="start" font-weight="normal" clip-path="url(#c_type)">Distribution list</text>
<rect x="766" y="586" width="23" height="27" fill="#f0f0f0" />
<rect x="772.5" y="593.5" width="12" height="12" fill="#fff" stroke="#b4b4b4"/><rect x="774.0" y="595" width="9" height="9" fill="none" stroke="#ececec"/>
<rect x="790" y="586" width="79" height="27" fill="#d6d6d6" />
<text x="986.5" y="605" font-size="13" fill="#111" text-anchor="end" font-weight="normal" clip-path="url(#c_created)">0/10/2024 09:09 PM</text>
<text x="992.5" y="605" font-size="13" fill="#111" text-anchor="start" font-weight="normal" clip-path="url(#c_desc)">New groups</text>
<text x="1169" y="605" font-size="13" fill="#111" text-anchor="start" font-weight="normal" clip-path="url(#c_owner)">Organization Management</text>
<rect x="1286" y="586" width="119" height="27" fill="#d6d6d6" />
<rect x="1406" y="586" width="119" height="27" fill="#d6d6d6" />
<line x1="45" y1="641.5" x2="1525" y2="641.5" stroke="#ececec" stroke-width="1" />
<line x1="64.5" y1="614" x2="64.5" y2="641" stroke="#ececec" stroke-width="1" />
<line x1="84.5" y1="614" x2="84.5" y2="641" stroke="#ececec" stroke-width="1" />
<line x1="109.5" y1="614" x2="109.5" y2="641" stroke="#ececec" stroke-width="1" />
<line x1="133.5" y1="614" x2="133.5" y2="641" stroke="#ececec" stroke-width="1" />
<line x1="157.5" y1="614" x2="157.5" y2="641" stroke="#ececec" stroke-width="1" />
<line x1="181.5" y1="614" x2="181.5" y2="641" stroke="#ececec" stroke-width="1" />
<line x1="357.5" y1="614" x2="357.5" y2="641" stroke="#ececec" stroke-width="1" />
<line x1="613.5" y1="614" x2="613.5" y2="641" stroke="#ececec" stroke-width="1" />
<line x1="637.5" y1="614" x2="637.5" y2="641" stroke="#ececec" stroke-width="1" />
<line x1="765.5" y1="614" x2="765.5" y2="641" stroke="#ececec" stroke-width="1" />
<line x1="789.5" y1="614" x2="789.5" y2="641" stroke="#ececec" stroke-width="1" />
<line x1="869.5" y1="614" x2="869.5" y2="641" stroke="#ececec" stroke-width="1" />
<line x1="989.5" y1="614" x2="989.5" y2="641" stroke="#ececec" stroke-width="1" />
<line x1="1166.5" y1="614" x2="1166.5" y2="641" stroke="#ececec" stroke-width="1" />
<line x1="1285.5" y1="614" x2="1285.5" y2="641" stroke="#ececec" stroke-width="1" />
<line x1="1405.5" y1="614" x2="1405.5" y2="641" stroke="#ececec" stroke-width="1" />
<line x1="1525.5" y1="614" x2="1525.5" y2="641" stroke="#ececec" stroke-width="1" />
<rect x="110" y="614" width="23" height="27" fill="#d6d6d6" />
<rect x="134" y="614" width="23" height="27" fill="#d6d6d6" />
<rect x="158" y="614" width="23" height="27" fill="#d6d6d6" />
<g fill="#2f7dc5"><circle cx="77.8" cy="623.8" r="2.3"/><path d="M74 631.3 Q74 626.5 77.8 626.5 Q82 626.5 82 630.0 Q82 631.3 80 631.3 Z"/><circle cx="72.2" cy="625.5" r="2.6" fill="#2f7dc5" stroke="#fff" stroke-width="0.8"/><path d="M68 632.5 Q68 628.1 72.2 628.1 Q76.5 628.1 76.5 632.5 Z" stroke="#fff" stroke-width="0.8"/></g>
<rect x="358" y="614" width="255" height="27" fill="#d6d6d6" />
<text x="184.5" y="633" font-size="13" fill="#111" text-anchor="start" font-weight="normal" clip-path="url(#c_name)">Compliance Search Test</text>
<rect x="614" y="614" width="23" height="27" fill="#d6d6d6" />
<text x="640.5" y="633" font-size="13" fill="#111" text-anchor="start" font-weight="normal" clip-path="url(#c_type)">Security Group</text>
<rect x="766" y="614" width="23" height="27" fill="#f0f0f0" />
<rect x="772.5" y="621.5" width="12" height="12" fill="#fff" stroke="#b4b4b4"/><rect x="774.0" y="623" width="9" height="9" fill="none" stroke="#ececec"/>
<text x="792.5" y="633" font-size="13" fill="#111" text-anchor="start" font-weight="normal" clip-path="url(#c_priv)">Private</text>
<text x="986.5" y="633" font-size="13" fill="#111" text-anchor="end" font-weight="normal" clip-path="url(#c_created)">11/9/2025 04:10 PM</text>
<rect x="990" y="614" width="176" height="27" fill="#d6d6d6" />
<text x="1169" y="633" font-size="13" fill="#111" text-anchor="start" font-weight="normal" clip-path="url(#c_owner)">ga_EH@sygx2.onmicrosoft.com</text>
<rect x="1286" y="614" width="119" height="27" fill="#d6d6d6" />
<rect x="1406" y="614" width="119" height="27" fill="#d6d6d6" />
<line x1="45" y1="669.5" x2="1525" y2="669.5" stroke="#ececec" stroke-width="1" />
<line x1="64.5" y1="642" x2="64.5" y2="669" stroke="#ececec" stroke-width="1" />
<line x1="84.5" y1="642" x2="84.5" y2="669" stroke="#ececec" stroke-width="1" />
<line x1="109.5" y1="642" x2="109.5" y2="669" stroke="#ececec" stroke-width="1" />
<line x1="133.5" y1="642" x2="133.5" y2="669" stroke="#ececec" stroke-width="1" />
<line x1="157.5" y1="642" x2="157.5" y2="669" stroke="#ececec" stroke-width="1" />
<line x1="181.5" y1="642" x2="181.5" y2="669" stroke="#ececec" stroke-width="1" />
<line x1="357.5" y1="642" x2="357.5" y2="669" stroke="#ececec" stroke-width="1" />
<line x1="613.5" y1="642" x2="613.5" y2="669" stroke="#ececec" stroke-width="1" />
<line x1="637.5" y1="642" x2="637.5" y2="669" stroke="#ececec" stroke-width="1" />
<line x1="765.5" y1="642" x2="765.5" y2="669" stroke="#ececec" stroke-width="1" />
<line x1="789.5" y1="642" x2="789.5" y2="669" stroke="#ececec" stroke-width="1" />
<line x1="869.5" y1="642" x2="869.5" y2="669" stroke="#ececec" stroke-width="1" />
<line x1="989.5" y1="642" x2="989.5" y2="669" stroke="#ececec" stroke-width="1" />
<line x1="1166.5" y1="642" x2="1166.5" y2="669" stroke="#ececec" stroke-width="1" />
<line x1="1285.5" y1="642" x2="1285.5" y2="669" stroke="#ececec" stroke-width="1" />
<line x1="1405.5" y1="642" x2="1405.5" y2="669" stroke="#ececec" stroke-width="1" />
<line x1="1525.5" y1="642" x2="1525.5" y2="669" stroke="#ececec" stroke-width="1" />
<rect x="110" y="642" width="23" height="27" fill="#d6d6d6" />
<g fill="#8b57a8"><circle cx="141.7" cy="650.3" r="2.2"/><circle cx="148" cy="650" r="1.7"/><path d="M138 653.5 H145.5 V659 Q145.5 662 141.7 662 Q138 662 138 659 Z"/><path d="M146.5 653.5 H150.5 V657 Q150.5 659.5 146.5 659.5 Z"/></g><circle cx="154.5" cy="652" r="0.7" fill="#b04a3a"/>
<rect x="158" y="642" width="23" height="27" fill="#d6d6d6" />
<circle cx="55" cy="655.5" r="6" fill="#fff" stroke="#777" stroke-width="1.4"/><circle cx="55" cy="655.5" r="3" fill="#a9a9a9"/>
<g fill="#2f7dc5"><circle cx="77.8" cy="651.8" r="2.3"/><path d="M74 659.3 Q74 654.5 77.8 654.5 Q82 654.5 82 658.0 Q82 659.3 80 659.3 Z"/><circle cx="72.2" cy="653.5" r="2.6" fill="#2f7dc5" stroke="#fff" stroke-width="0.8"/><path d="M68 660.5 Q68 656.1 72.2 656.1 Q76.5 656.1 76.5 660.5 Z" stroke="#fff" stroke-width="0.8"/></g>
<text x="360.5" y="661" font-size="13" fill="#111" text-anchor="start" font-weight="normal" clip-path="url(#c_email)">ConfidentialMatters@ovh.ytria.io</text>
<text x="184.5" y="661" font-size="13" fill="#111" text-anchor="start" font-weight="normal" clip-path="url(#c_name)">Confidential Matters</text>
<rect x="614" y="642" width="23" height="27" fill="#d6d6d6" />
<text x="640.5" y="661" font-size="13" fill="#111" text-anchor="start" font-weight="normal" clip-path="url(#c_type)">Microsoft 365 group</text>
<rect x="766" y="642" width="23" height="27" fill="#f0f0f0" />
<rect x="772.5" y="649.5" width="12" height="12" fill="#fff" stroke="#b4b4b4"/><rect x="774.0" y="651" width="9" height="9" fill="none" stroke="#ececec"/>
<text x="792.5" y="661" font-size="13" fill="#111" text-anchor="start" font-weight="normal" clip-path="url(#c_priv)">Private</text>
<text x="986.5" y="661" font-size="13" fill="#111" text-anchor="end" font-weight="normal" clip-path="url(#c_created)">3/7/2025 01:10 PM</text>
<text x="992.5" y="661" font-size="13" fill="#111" text-anchor="start" font-weight="normal" clip-path="url(#c_desc)">Has classification label set.</text>
<text x="1169" y="661" font-size="13" fill="#111" text-anchor="start" font-weight="normal" clip-path="url(#c_owner)">[2] AADMIN1@sygx2.onmicrosoft.com</text>
<text x="1402.5" y="661" font-size="13" fill="#111" text-anchor="end" font-weight="normal" >1.41MB</text>
<text x="1522.5" y="661" font-size="13" fill="#111" text-anchor="end" font-weight="normal" >25.00TB</text>
<line x1="45" y1="697.5" x2="1525" y2="697.5" stroke="#ececec" stroke-width="1" />
<line x1="64.5" y1="670" x2="64.5" y2="697" stroke="#ececec" stroke-width="1" />
<line x1="84.5" y1="670" x2="84.5" y2="697" stroke="#ececec" stroke-width="1" />
<line x1="109.5" y1="670" x2="109.5" y2="697" stroke="#ececec" stroke-width="1" />
<line x1="133.5" y1="670" x2="133.5" y2="697" stroke="#ececec" stroke-width="1" />
<line x1="157.5" y1="670" x2="157.5" y2="697" stroke="#ececec" stroke-width="1" />
<line x1="181.5" y1="670" x2="181.5" y2="697" stroke="#ececec" stroke-width="1" />
<line x1="357.5" y1="670" x2="357.5" y2="697" stroke="#ececec" stroke-width="1" />
<line x1="613.5" y1="670" x2="613.5" y2="697" stroke="#ececec" stroke-width="1" />
<line x1="637.5" y1="670" x2="637.5" y2="697" stroke="#ececec" stroke-width="1" />
<line x1="765.5" y1="670" x2="765.5" y2="697" stroke="#ececec" stroke-width="1" />
<line x1="789.5" y1="670" x2="789.5" y2="697" stroke="#ececec" stroke-width="1" />
<line x1="869.5" y1="670" x2="869.5" y2="697" stroke="#ececec" stroke-width="1" />
<line x1="989.5" y1="670" x2="989.5" y2="697" stroke="#ececec" stroke-width="1" />
<line x1="1166.5" y1="670" x2="1166.5" y2="697" stroke="#ececec" stroke-width="1" />
<line x1="1285.5" y1="670" x2="1285.5" y2="697" stroke="#ececec" stroke-width="1" />
<line x1="1405.5" y1="670" x2="1405.5" y2="697" stroke="#ececec" stroke-width="1" />
<line x1="1525.5" y1="670" x2="1525.5" y2="697" stroke="#ececec" stroke-width="1" />
<rect x="110" y="670" width="23" height="27" fill="#d6d6d6" />
<g fill="#8b57a8"><circle cx="141.7" cy="678.3" r="2.2"/><circle cx="148" cy="678" r="1.7"/><path d="M138 681.5 H145.5 V687 Q145.5 690 141.7 690 Q138 690 138 687 Z"/><path d="M146.5 681.5 H150.5 V685 Q150.5 687.5 146.5 687.5 Z"/></g><circle cx="154.5" cy="680" r="0.7" fill="#b04a3a"/>
<rect x="158" y="670" width="23" height="27" fill="#d6d6d6" />
<circle cx="55" cy="683.5" r="6" fill="#fff" stroke="#777" stroke-width="1.4"/><circle cx="55" cy="683.5" r="3" fill="#a9a9a9"/>
<g fill="#2f7dc5"><circle cx="77.8" cy="679.8" r="2.3"/><path d="M74 687.3 Q74 682.5 77.8 682.5 Q82 682.5 82 686.0 Q82 687.3 80 687.3 Z"/><circle cx="72.2" cy="681.5" r="2.6" fill="#2f7dc5" stroke="#fff" stroke-width="0.8"/><path d="M68 688.5 Q68 684.1 72.2 684.1 Q76.5 684.1 76.5 688.5 Z" stroke="#fff" stroke-width="0.8"/></g>
<text x="360.5" y="689" font-size="13" fill="#111" text-anchor="start" font-weight="normal" clip-path="url(#c_email)">ConfidentialMattersMore@ovh.ytria.io</text>
<text x="184.5" y="689" font-size="13" fill="#111" text-anchor="start" font-weight="normal" clip-path="url(#c_name)">Confidential Matters  More</text>
<rect x="614" y="670" width="23" height="27" fill="#d6d6d6" />
<text x="640.5" y="689" font-size="13" fill="#111" text-anchor="start" font-weight="normal" clip-path="url(#c_type)">Microsoft 365 group</text>
<rect x="766" y="670" width="23" height="27" fill="#f0f0f0" />
<rect x="772.5" y="677.5" width="12" height="12" fill="#fff" stroke="#b4b4b4"/><rect x="774.0" y="679" width="9" height="9" fill="none" stroke="#ececec"/>
<text x="792.5" y="689" font-size="13" fill="#111" text-anchor="start" font-weight="normal" clip-path="url(#c_priv)">Private</text>
<text x="986.5" y="689" font-size="13" fill="#111" text-anchor="end" font-weight="normal" clip-path="url(#c_created)">3/7/2025 02:12 PM</text>
<text x="992.5" y="689" font-size="13" fill="#111" text-anchor="start" font-weight="normal" clip-path="url(#c_desc)">test for sensitivity label</text>
<text x="1169" y="689" font-size="13" fill="#111" text-anchor="start" font-weight="normal" clip-path="url(#c_owner)">AADMIN1@sygx2.onmicrosoft.com</text>
<text x="1402.5" y="689" font-size="13" fill="#111" text-anchor="end" font-weight="normal" >1.41MB</text>
<text x="1522.5" y="689" font-size="13" fill="#111" text-anchor="end" font-weight="normal" >25.00TB</text>
<line x1="45" y1="725.5" x2="1525" y2="725.5" stroke="#ececec" stroke-width="1" />
<line x1="64.5" y1="698" x2="64.5" y2="725" stroke="#ececec" stroke-width="1" />
<line x1="84.5" y1="698" x2="84.5" y2="725" stroke="#ececec" stroke-width="1" />
<line x1="109.5" y1="698" x2="109.5" y2="725" stroke="#ececec" stroke-width="1" />
<line x1="133.5" y1="698" x2="133.5" y2="725" stroke="#ececec" stroke-width="1" />
<line x1="157.5" y1="698" x2="157.5" y2="725" stroke="#ececec" stroke-width="1" />
<line x1="181.5" y1="698" x2="181.5" y2="725" stroke="#ececec" stroke-width="1" />
<line x1="357.5" y1="698" x2="357.5" y2="725" stroke="#ececec" stroke-width="1" />
<line x1="613.5" y1="698" x2="613.5" y2="725" stroke="#ececec" stroke-width="1" />
<line x1="637.5" y1="698" x2="637.5" y2="725" stroke="#ececec" stroke-width="1" />
<line x1="765.5" y1="698" x2="765.5" y2="725" stroke="#ececec" stroke-width="1" />
<line x1="789.5" y1="698" x2="789.5" y2="725" stroke="#ececec" stroke-width="1" />
<line x1="869.5" y1="698" x2="869.5" y2="725" stroke="#ececec" stroke-width="1" />
<line x1="989.5" y1="698" x2="989.5" y2="725" stroke="#ececec" stroke-width="1" />
<line x1="1166.5" y1="698" x2="1166.5" y2="725" stroke="#ececec" stroke-width="1" />
<line x1="1285.5" y1="698" x2="1285.5" y2="725" stroke="#ececec" stroke-width="1" />
<line x1="1405.5" y1="698" x2="1405.5" y2="725" stroke="#ececec" stroke-width="1" />
<line x1="1525.5" y1="698" x2="1525.5" y2="725" stroke="#ececec" stroke-width="1" />
<rect x="110" y="698" width="23" height="27" fill="#d6d6d6" />
<rect x="134" y="698" width="23" height="27" fill="#d6d6d6" />
<rect x="158" y="698" width="23" height="27" fill="#d6d6d6" />
<circle cx="55" cy="711.5" r="6" fill="#fff" stroke="#777" stroke-width="1.4"/><circle cx="55" cy="711.5" r="3" fill="#a9a9a9"/>
<g fill="#2f7dc5"><circle cx="77.8" cy="707.8" r="2.3"/><path d="M74 715.3 Q74 710.5 77.8 710.5 Q82 710.5 82 714.0 Q82 715.3 80 715.3 Z"/><circle cx="72.2" cy="709.5" r="2.6" fill="#2f7dc5" stroke="#fff" stroke-width="0.8"/><path d="M68 716.5 Q68 712.1 72.2 712.1 Q76.5 712.1 76.5 716.5 Z" stroke="#fff" stroke-width="0.8"/></g>
<text x="360.5" y="717" font-size="13" fill="#111" text-anchor="start" font-weight="normal" clip-path="url(#c_email)">crazy-ideas@ovh.ytria.io</text>
<text x="184.5" y="717" font-size="13" fill="#111" text-anchor="start" font-weight="normal" clip-path="url(#c_name)">Crazy Ideas</text>
<rect x="614" y="698" width="23" height="27" fill="#d6d6d6" />
<text x="640.5" y="717" font-size="13" fill="#111" text-anchor="start" font-weight="normal" clip-path="url(#c_type)">Distribution list</text>
<rect x="766" y="698" width="23" height="27" fill="#f0f0f0" />
<rect x="772.5" y="705.5" width="12" height="12" fill="#fff" stroke="#b4b4b4"/><rect x="774.0" y="707" width="9" height="9" fill="none" stroke="#ececec"/>
<rect x="790" y="698" width="79" height="27" fill="#d6d6d6" />
<text x="986.5" y="717" font-size="13" fill="#111" text-anchor="end" font-weight="normal" clip-path="url(#c_created)">3/18/2025 05:18 PM</text>
<text x="992.5" y="717" font-size="13" fill="#111" text-anchor="start" font-weight="normal" clip-path="url(#c_desc)">Crazy Ideas</text>
<text x="1169" y="717" font-size="13" fill="#111" text-anchor="start" font-weight="normal" clip-path="url(#c_owner)">AADMIN1@sygx2.onmicrosoft.com</text>
<rect x="1286" y="698" width="119" height="27" fill="#d6d6d6" />
<rect x="1406" y="698" width="119" height="27" fill="#d6d6d6" />
<line x1="45" y1="753.5" x2="1525" y2="753.5" stroke="#ececec" stroke-width="1" />
<line x1="64.5" y1="726" x2="64.5" y2="753" stroke="#ececec" stroke-width="1" />
<line x1="84.5" y1="726" x2="84.5" y2="753" stroke="#ececec" stroke-width="1" />
<line x1="109.5" y1="726" x2="109.5" y2="753" stroke="#ececec" stroke-width="1" />
<line x1="133.5" y1="726" x2="133.5" y2="753" stroke="#ececec" stroke-width="1" />
<line x1="157.5" y1="726" x2="157.5" y2="753" stroke="#ececec" stroke-width="1" />
<line x1="181.5" y1="726" x2="181.5" y2="753" stroke="#ececec" stroke-width="1" />
<line x1="357.5" y1="726" x2="357.5" y2="753" stroke="#ececec" stroke-width="1" />
<line x1="613.5" y1="726" x2="613.5" y2="753" stroke="#ececec" stroke-width="1" />
<line x1="637.5" y1="726" x2="637.5" y2="753" stroke="#ececec" stroke-width="1" />
<line x1="765.5" y1="726" x2="765.5" y2="753" stroke="#ececec" stroke-width="1" />
<line x1="789.5" y1="726" x2="789.5" y2="753" stroke="#ececec" stroke-width="1" />
<line x1="869.5" y1="726" x2="869.5" y2="753" stroke="#ececec" stroke-width="1" />
<line x1="989.5" y1="726" x2="989.5" y2="753" stroke="#ececec" stroke-width="1" />
<line x1="1166.5" y1="726" x2="1166.5" y2="753" stroke="#ececec" stroke-width="1" />
<line x1="1285.5" y1="726" x2="1285.5" y2="753" stroke="#ececec" stroke-width="1" />
<line x1="1405.5" y1="726" x2="1405.5" y2="753" stroke="#ececec" stroke-width="1" />
<line x1="1525.5" y1="726" x2="1525.5" y2="753" stroke="#ececec" stroke-width="1" />
<rect x="110" y="726" width="23" height="27" fill="#d6d6d6" />
<rect x="134" y="726" width="23" height="27" fill="#d6d6d6" />
<rect x="158" y="726" width="23" height="27" fill="#d6d6d6" />
<g fill="#2f7dc5"><circle cx="77.8" cy="735.8" r="2.3"/><path d="M74 743.3 Q74 738.5 77.8 738.5 Q82 738.5 82 742.0 Q82 743.3 80 743.3 Z"/><circle cx="72.2" cy="737.5" r="2.6" fill="#2f7dc5" stroke="#fff" stroke-width="0.8"/><path d="M68 744.5 Q68 740.1 72.2 740.1 Q76.5 740.1 76.5 744.5 Z" stroke="#fff" stroke-width="0.8"/></g>
<text x="360.5" y="745" font-size="13" fill="#111" text-anchor="start" font-weight="normal" clip-path="url(#c_email)">Departmentheads@sygx2.onmicrosoft.com</text>
<text x="184.5" y="745" font-size="13" fill="#111" text-anchor="start" font-weight="normal" clip-path="url(#c_name)">Department heads</text>
<rect x="614" y="726" width="23" height="27" fill="#f0f0f0" />
<rect x="620.5" y="733.5" width="12" height="12" fill="#fff" stroke="#b4b4b4"/><rect x="622.0" y="735" width="9" height="9" fill="none" stroke="#ececec"/>
<path d="M623.5 739.5 L625.7 742.5 L630.0 736" fill="none" stroke="#a8a8a8" stroke-width="1.5"/>
<text x="640.5" y="745" font-size="13" fill="#111" text-anchor="start" font-weight="normal" clip-path="url(#c_type)">Mail-enabled security</text>
<rect x="766" y="726" width="23" height="27" fill="#f0f0f0" />
<rect x="772.5" y="733.5" width="12" height="12" fill="#fff" stroke="#b4b4b4"/><rect x="774.0" y="735" width="9" height="9" fill="none" stroke="#ececec"/>
<rect x="790" y="726" width="79" height="27" fill="#d6d6d6" />
<text x="986.5" y="745" font-size="13" fill="#111" text-anchor="end" font-weight="normal" clip-path="url(#c_created)">0/10/2024 09:08 PM</text>
<text x="992.5" y="745" font-size="13" fill="#111" text-anchor="start" font-weight="normal" clip-path="url(#c_desc)">new description</text>
<text x="1169" y="745" font-size="13" fill="#111" text-anchor="start" font-weight="normal" clip-path="url(#c_owner)">Organization Management</text>
<rect x="1286" y="726" width="119" height="27" fill="#d6d6d6" />
<rect x="1406" y="726" width="119" height="27" fill="#d6d6d6" />
<line x1="45" y1="781.5" x2="1525" y2="781.5" stroke="#ececec" stroke-width="1" />
<line x1="64.5" y1="754" x2="64.5" y2="781" stroke="#ececec" stroke-width="1" />
<line x1="84.5" y1="754" x2="84.5" y2="781" stroke="#ececec" stroke-width="1" />
<line x1="109.5" y1="754" x2="109.5" y2="781" stroke="#ececec" stroke-width="1" />
<line x1="133.5" y1="754" x2="133.5" y2="781" stroke="#ececec" stroke-width="1" />
<line x1="157.5" y1="754" x2="157.5" y2="781" stroke="#ececec" stroke-width="1" />
<line x1="181.5" y1="754" x2="181.5" y2="781" stroke="#ececec" stroke-width="1" />
<line x1="357.5" y1="754" x2="357.5" y2="781" stroke="#ececec" stroke-width="1" />
<line x1="613.5" y1="754" x2="613.5" y2="781" stroke="#ececec" stroke-width="1" />
<line x1="637.5" y1="754" x2="637.5" y2="781" stroke="#ececec" stroke-width="1" />
<line x1="765.5" y1="754" x2="765.5" y2="781" stroke="#ececec" stroke-width="1" />
<line x1="789.5" y1="754" x2="789.5" y2="781" stroke="#ececec" stroke-width="1" />
<line x1="869.5" y1="754" x2="869.5" y2="781" stroke="#ececec" stroke-width="1" />
<line x1="989.5" y1="754" x2="989.5" y2="781" stroke="#ececec" stroke-width="1" />
<line x1="1166.5" y1="754" x2="1166.5" y2="781" stroke="#ececec" stroke-width="1" />
<line x1="1285.5" y1="754" x2="1285.5" y2="781" stroke="#ececec" stroke-width="1" />
<line x1="1405.5" y1="754" x2="1405.5" y2="781" stroke="#ececec" stroke-width="1" />
<line x1="1525.5" y1="754" x2="1525.5" y2="781" stroke="#ececec" stroke-width="1" />
<rect x="110" y="754" width="23" height="27" fill="#d6d6d6" />
<g fill="#8b57a8"><circle cx="141.7" cy="762.3" r="2.2"/><circle cx="148" cy="762" r="1.7"/><path d="M138 765.5 H145.5 V771 Q145.5 774 141.7 774 Q138 774 138 771 Z"/><path d="M146.5 765.5 H150.5 V769 Q150.5 771.5 146.5 771.5 Z"/></g><circle cx="154.5" cy="764" r="0.7" fill="#b04a3a"/>
<rect x="158" y="754" width="23" height="27" fill="#d6d6d6" />
<circle cx="55" cy="767.5" r="6" fill="#fff" stroke="#777" stroke-width="1.4"/><circle cx="55" cy="767.5" r="3" fill="#a9a9a9"/>
<g fill="#2f7dc5"><circle cx="77.8" cy="763.8" r="2.3"/><path d="M74 771.3 Q74 766.5 77.8 766.5 Q82 766.5 82 770.0 Q82 771.3 80 771.3 Z"/><circle cx="72.2" cy="765.5" r="2.6" fill="#2f7dc5" stroke="#fff" stroke-width="0.8"/><path d="M68 772.5 Q68 768.1 72.2 768.1 Q76.5 768.1 76.5 772.5 Z" stroke="#fff" stroke-width="0.8"/></g>
<text x="360.5" y="773" font-size="13" fill="#111" text-anchor="start" font-weight="normal" clip-path="url(#c_email)">DigitalInitiativePublicRelations@sygx2.onmicrosoft.com</text>
<text x="184.5" y="773" font-size="13" fill="#111" text-anchor="start" font-weight="normal" clip-path="url(#c_name)">Digital Initiative Public Relations</text>
<rect x="614" y="754" width="23" height="27" fill="#d6d6d6" />
<text x="640.5" y="773" font-size="13" fill="#111" text-anchor="start" font-weight="normal" clip-path="url(#c_type)">Microsoft 365 group</text>
<rect x="766" y="754" width="23" height="27" fill="#f0f0f0" />
<rect x="772.5" y="761.5" width="12" height="12" fill="#fff" stroke="#b4b4b4"/><rect x="774.0" y="763" width="9" height="9" fill="none" stroke="#ececec"/>
<text x="792.5" y="773" font-size="13" fill="#111" text-anchor="start" font-weight="normal" clip-path="url(#c_priv)">Public</text>
<text x="986.5" y="773" font-size="13" fill="#111" text-anchor="end" font-weight="normal" clip-path="url(#c_created)">7/17/2024 04:24 AM</text>
<text x="992.5" y="773" font-size="13" fill="#111" text-anchor="start" font-weight="normal" clip-path="url(#c_desc)">Description of Digital Initiative</text>
<text x="1169" y="773" font-size="13" fill="#111" text-anchor="start" font-weight="normal" clip-path="url(#c_owner)">[3] AADMIN1@sygx2.onmicrosoft.com</text>
<text x="1402.5" y="773" font-size="13" fill="#111" text-anchor="end" font-weight="normal" >1.51MB</text>
<text x="1522.5" y="773" font-size="13" fill="#111" text-anchor="end" font-weight="normal" >25.00TB</text>
<line x1="45" y1="809.5" x2="1525" y2="809.5" stroke="#ececec" stroke-width="1" />
<line x1="64.5" y1="782" x2="64.5" y2="809" stroke="#ececec" stroke-width="1" />
<line x1="84.5" y1="782" x2="84.5" y2="809" stroke="#ececec" stroke-width="1" />
<line x1="109.5" y1="782" x2="109.5" y2="809" stroke="#ececec" stroke-width="1" />
<line x1="133.5" y1="782" x2="133.5" y2="809" stroke="#ececec" stroke-width="1" />
<line x1="157.5" y1="782" x2="157.5" y2="809" stroke="#ececec" stroke-width="1" />
<line x1="181.5" y1="782" x2="181.5" y2="809" stroke="#ececec" stroke-width="1" />
<line x1="357.5" y1="782" x2="357.5" y2="809" stroke="#ececec" stroke-width="1" />
<line x1="613.5" y1="782" x2="613.5" y2="809" stroke="#ececec" stroke-width="1" />
<line x1="637.5" y1="782" x2="637.5" y2="809" stroke="#ececec" stroke-width="1" />
<line x1="765.5" y1="782" x2="765.5" y2="809" stroke="#ececec" stroke-width="1" />
<line x1="789.5" y1="782" x2="789.5" y2="809" stroke="#ececec" stroke-width="1" />
<line x1="869.5" y1="782" x2="869.5" y2="809" stroke="#ececec" stroke-width="1" />
<line x1="989.5" y1="782" x2="989.5" y2="809" stroke="#ececec" stroke-width="1" />
<line x1="1166.5" y1="782" x2="1166.5" y2="809" stroke="#ececec" stroke-width="1" />
<line x1="1285.5" y1="782" x2="1285.5" y2="809" stroke="#ececec" stroke-width="1" />
<line x1="1405.5" y1="782" x2="1405.5" y2="809" stroke="#ececec" stroke-width="1" />
<line x1="1525.5" y1="782" x2="1525.5" y2="809" stroke="#ececec" stroke-width="1" />
<rect x="110" y="782" width="23" height="27" fill="#d6d6d6" />
<rect x="134" y="782" width="23" height="27" fill="#d6d6d6" />
<rect x="158" y="782" width="23" height="27" fill="#d6d6d6" />
<circle cx="55" cy="795.5" r="6" fill="#fff" stroke="#777" stroke-width="1.4"/><circle cx="55" cy="795.5" r="3" fill="#a9a9a9"/>
<g fill="#2f7dc5"><circle cx="77.8" cy="791.8" r="2.3"/><path d="M74 799.3 Q74 794.5 77.8 794.5 Q82 794.5 82 798.0 Q82 799.3 80 799.3 Z"/><circle cx="72.2" cy="793.5" r="2.6" fill="#2f7dc5" stroke="#fff" stroke-width="0.8"/><path d="M68 800.5 Q68 796.1 72.2 796.1 Q76.5 796.1 76.5 800.5 Z" stroke="#fff" stroke-width="0.8"/></g>
<text x="360.5" y="801" font-size="13" fill="#111" text-anchor="start" font-weight="normal" clip-path="url(#c_email)">directors@ovh.ytria.io</text>
<text x="184.5" y="801" font-size="13" fill="#111" text-anchor="start" font-weight="normal" clip-path="url(#c_name)">Directors</text>
<rect x="614" y="782" width="23" height="27" fill="#f0f0f0" />
<rect x="620.5" y="789.5" width="12" height="12" fill="#fff" stroke="#b4b4b4"/><rect x="622.0" y="791" width="9" height="9" fill="none" stroke="#ececec"/>
<path d="M623.5 795.5 L625.7 798.5 L630.0 792" fill="none" stroke="#a8a8a8" stroke-width="1.5"/>
<text x="640.5" y="801" font-size="13" fill="#111" text-anchor="start" font-weight="normal" clip-path="url(#c_type)">Mail-enabled security</text>
<rect x="766" y="782" width="23" height="27" fill="#f0f0f0" />
<rect x="772.5" y="789.5" width="12" height="12" fill="#fff" stroke="#b4b4b4"/><rect x="774.0" y="791" width="9" height="9" fill="none" stroke="#ececec"/>
<rect x="790" y="782" width="79" height="27" fill="#d6d6d6" />
<text x="986.5" y="801" font-size="13" fill="#111" text-anchor="end" font-weight="normal" clip-path="url(#c_created)">0/10/2024 09:08 PM</text>
<text x="992.5" y="801" font-size="13" fill="#111" text-anchor="start" font-weight="normal" clip-path="url(#c_desc)">List of directors</text>
<text x="1169" y="801" font-size="13" fill="#111" text-anchor="start" font-weight="normal" clip-path="url(#c_owner)">Organization Management</text>
<rect x="1286" y="782" width="119" height="27" fill="#d6d6d6" />
<rect x="1406" y="782" width="119" height="27" fill="#d6d6d6" />
<line x1="45" y1="837.5" x2="1525" y2="837.5" stroke="#ececec" stroke-width="1" />
<line x1="64.5" y1="810" x2="64.5" y2="837" stroke="#ececec" stroke-width="1" />
<line x1="84.5" y1="810" x2="84.5" y2="837" stroke="#ececec" stroke-width="1" />
<line x1="109.5" y1="810" x2="109.5" y2="837" stroke="#ececec" stroke-width="1" />
<line x1="133.5" y1="810" x2="133.5" y2="837" stroke="#ececec" stroke-width="1" />
<line x1="157.5" y1="810" x2="157.5" y2="837" stroke="#ececec" stroke-width="1" />
<line x1="181.5" y1="810" x2="181.5" y2="837" stroke="#ececec" stroke-width="1" />
<line x1="357.5" y1="810" x2="357.5" y2="837" stroke="#ececec" stroke-width="1" />
<line x1="613.5" y1="810" x2="613.5" y2="837" stroke="#ececec" stroke-width="1" />
<line x1="637.5" y1="810" x2="637.5" y2="837" stroke="#ececec" stroke-width="1" />
<line x1="765.5" y1="810" x2="765.5" y2="837" stroke="#ececec" stroke-width="1" />
<line x1="789.5" y1="810" x2="789.5" y2="837" stroke="#ececec" stroke-width="1" />
<line x1="869.5" y1="810" x2="869.5" y2="837" stroke="#ececec" stroke-width="1" />
<line x1="989.5" y1="810" x2="989.5" y2="837" stroke="#ececec" stroke-width="1" />
<line x1="1166.5" y1="810" x2="1166.5" y2="837" stroke="#ececec" stroke-width="1" />
<line x1="1285.5" y1="810" x2="1285.5" y2="837" stroke="#ececec" stroke-width="1" />
<line x1="1405.5" y1="810" x2="1405.5" y2="837" stroke="#ececec" stroke-width="1" />
<line x1="1525.5" y1="810" x2="1525.5" y2="837" stroke="#ececec" stroke-width="1" />
<rect x="110" y="810" width="23" height="27" fill="#d6d6d6" />
<rect x="134" y="810" width="23" height="27" fill="#d6d6d6" />
<rect x="158" y="810" width="23" height="27" fill="#d6d6d6" />
<circle cx="55" cy="823.5" r="6" fill="#fff" stroke="#777" stroke-width="1.4"/><circle cx="55" cy="823.5" r="3" fill="#a9a9a9"/>
<g fill="#2f7dc5"><circle cx="77.8" cy="819.8" r="2.3"/><path d="M74 827.3 Q74 822.5 77.8 822.5 Q82 822.5 82 826.0 Q82 827.3 80 827.3 Z"/><circle cx="72.2" cy="821.5" r="2.6" fill="#2f7dc5" stroke="#fff" stroke-width="0.8"/><path d="M68 828.5 Q68 824.1 72.2 824.1 Q76.5 824.1 76.5 828.5 Z" stroke="#fff" stroke-width="0.8"/></g>
<text x="360.5" y="829" font-size="13" fill="#111" text-anchor="start" font-weight="normal" clip-path="url(#c_email)">financenewsletter@ovh.ytria.io</text>
<text x="184.5" y="829" font-size="13" fill="#111" text-anchor="start" font-weight="normal" clip-path="url(#c_name)">Finance Newsletter</text>
<rect x="614" y="810" width="23" height="27" fill="#f0f0f0" />
<rect x="620.5" y="817.5" width="12" height="12" fill="#fff" stroke="#b4b4b4"/><rect x="622.0" y="819" width="9" height="9" fill="none" stroke="#ececec"/>
<path d="M623.5 823.5 L625.7 826.5 L630.0 820" fill="none" stroke="#a8a8a8" stroke-width="1.5"/>
<text x="640.5" y="829" font-size="13" fill="#111" text-anchor="start" font-weight="normal" clip-path="url(#c_type)">Distribution list</text>
<rect x="766" y="810" width="23" height="27" fill="#f0f0f0" />
<rect x="772.5" y="817.5" width="12" height="12" fill="#fff" stroke="#b4b4b4"/><rect x="774.0" y="819" width="9" height="9" fill="none" stroke="#ececec"/>
<rect x="790" y="810" width="79" height="27" fill="#d6d6d6" />
<text x="986.5" y="829" font-size="13" fill="#111" text-anchor="end" font-weight="normal" clip-path="url(#c_created)">0/10/2024 09:08 PM</text>
<rect x="990" y="810" width="176" height="27" fill="#d6d6d6" />
<text x="1169" y="829" font-size="13" fill="#111" text-anchor="start" font-weight="normal" clip-path="url(#c_owner)">Alvin.Harper@sygx2.onmicrosoft.com</text>
<rect x="1286" y="810" width="119" height="27" fill="#d6d6d6" />
<rect x="1406" y="810" width="119" height="27" fill="#d6d6d6" />
<line x1="45" y1="865.5" x2="1525" y2="865.5" stroke="#ececec" stroke-width="1" />
<line x1="64.5" y1="838" x2="64.5" y2="865" stroke="#ececec" stroke-width="1" />
<line x1="84.5" y1="838" x2="84.5" y2="865" stroke="#ececec" stroke-width="1" />
<line x1="109.5" y1="838" x2="109.5" y2="865" stroke="#ececec" stroke-width="1" />
<line x1="133.5" y1="838" x2="133.5" y2="865" stroke="#ececec" stroke-width="1" />
<line x1="157.5" y1="838" x2="157.5" y2="865" stroke="#ececec" stroke-width="1" />
<line x1="181.5" y1="838" x2="181.5" y2="865" stroke="#ececec" stroke-width="1" />
<line x1="357.5" y1="838" x2="357.5" y2="865" stroke="#ececec" stroke-width="1" />
<line x1="613.5" y1="838" x2="613.5" y2="865" stroke="#ececec" stroke-width="1" />
<line x1="637.5" y1="838" x2="637.5" y2="865" stroke="#ececec" stroke-width="1" />
<line x1="765.5" y1="838" x2="765.5" y2="865" stroke="#ececec" stroke-width="1" />
<line x1="789.5" y1="838" x2="789.5" y2="865" stroke="#ececec" stroke-width="1" />
<line x1="869.5" y1="838" x2="869.5" y2="865" stroke="#ececec" stroke-width="1" />
<line x1="989.5" y1="838" x2="989.5" y2="865" stroke="#ececec" stroke-width="1" />
<line x1="1166.5" y1="838" x2="1166.5" y2="865" stroke="#ececec" stroke-width="1" />
<line x1="1285.5" y1="838" x2="1285.5" y2="865" stroke="#ececec" stroke-width="1" />
<line x1="1405.5" y1="838" x2="1405.5" y2="865" stroke="#ececec" stroke-width="1" />
<line x1="1525.5" y1="838" x2="1525.5" y2="865" stroke="#ececec" stroke-width="1" />
<rect x="110" y="838" width="23" height="27" fill="#d6d6d6" />
<rect x="134" y="838" width="23" height="27" fill="#d6d6d6" />
<rect x="158" y="838" width="23" height="27" fill="#d6d6d6" />
<circle cx="55" cy="851.5" r="6" fill="#fff" stroke="#777" stroke-width="1.4"/><circle cx="55" cy="851.5" r="3" fill="#a9a9a9"/>
<g fill="#2f7dc5"><circle cx="77.8" cy="847.8" r="2.3"/><path d="M74 855.3 Q74 850.5 77.8 850.5 Q82 850.5 82 854.0 Q82 855.3 80 855.3 Z"/><circle cx="72.2" cy="849.5" r="2.6" fill="#2f7dc5" stroke="#fff" stroke-width="0.8"/><path d="M68 856.5 Q68 852.1 72.2 852.1 Q76.5 852.1 76.5 856.5 Z" stroke="#fff" stroke-width="0.8"/></g>
<text x="360.5" y="857" font-size="13" fill="#111" text-anchor="start" font-weight="normal" clip-path="url(#c_email)">financialadviceforsoftwareengineers@ovh.ytria.io</text>
<text x="184.5" y="857" font-size="13" fill="#111" text-anchor="start" font-weight="normal" clip-path="url(#c_name)">Financial Advice for Software Engineers</text>
<rect x="614" y="838" width="23" height="27" fill="#d6d6d6" />
<text x="640.5" y="857" font-size="13" fill="#111" text-anchor="start" font-weight="normal" clip-path="url(#c_type)">Microsoft 365 group</text>
<rect x="766" y="838" width="23" height="27" fill="#f0f0f0" />
<rect x="772.5" y="845.5" width="12" height="12" fill="#fff" stroke="#b4b4b4"/><rect x="774.0" y="847" width="9" height="9" fill="none" stroke="#ececec"/>
<text x="792.5" y="857" font-size="13" fill="#111" text-anchor="start" font-weight="normal" clip-path="url(#c_priv)">Public</text>
<text x="986.5" y="857" font-size="13" fill="#111" text-anchor="end" font-weight="normal" clip-path="url(#c_created)">1/18/2025 03:45 PM</text>
<text x="992.5" y="857" font-size="13" fill="#111" text-anchor="start" font-weight="normal" clip-path="url(#c_desc)">A community where financial advice</text>
<text x="1169" y="857" font-size="13" fill="#111" text-anchor="start" font-weight="normal" clip-path="url(#c_owner)">AADMIN1@sygx2.onmicrosoft.com</text>
<text x="1402.5" y="857" font-size="13" fill="#111" text-anchor="end" font-weight="normal" >1.34MB</text>
<text x="1522.5" y="857" font-size="13" fill="#111" text-anchor="end" font-weight="normal" >25.00TB</text>
<line x1="45" y1="893.5" x2="1525" y2="893.5" stroke="#ececec" stroke-width="1" />
<line x1="64.5" y1="866" x2="64.5" y2="893" stroke="#ececec" stroke-width="1" />
<line x1="84.5" y1="866" x2="84.5" y2="893" stroke="#ececec" stroke-width="1" />
<line x1="109.5" y1="866" x2="109.5" y2="893" stroke="#ececec" stroke-width="1" />
<line x1="133.5" y1="866" x2="133.5" y2="893" stroke="#ececec" stroke-width="1" />
<line x1="157.5" y1="866" x2="157.5" y2="893" stroke="#ececec" stroke-width="1" />
<line x1="181.5" y1="866" x2="181.5" y2="893" stroke="#ececec" stroke-width="1" />
<line x1="357.5" y1="866" x2="357.5" y2="893" stroke="#ececec" stroke-width="1" />
<line x1="613.5" y1="866" x2="613.5" y2="893" stroke="#ececec" stroke-width="1" />
<line x1="637.5" y1="866" x2="637.5" y2="893" stroke="#ececec" stroke-width="1" />
<line x1="765.5" y1="866" x2="765.5" y2="893" stroke="#ececec" stroke-width="1" />
<line x1="789.5" y1="866" x2="789.5" y2="893" stroke="#ececec" stroke-width="1" />
<line x1="869.5" y1="866" x2="869.5" y2="893" stroke="#ececec" stroke-width="1" />
<line x1="989.5" y1="866" x2="989.5" y2="893" stroke="#ececec" stroke-width="1" />
<line x1="1166.5" y1="866" x2="1166.5" y2="893" stroke="#ececec" stroke-width="1" />
<line x1="1285.5" y1="866" x2="1285.5" y2="893" stroke="#ececec" stroke-width="1" />
<line x1="1405.5" y1="866" x2="1405.5" y2="893" stroke="#ececec" stroke-width="1" />
<line x1="1525.5" y1="866" x2="1525.5" y2="893" stroke="#ececec" stroke-width="1" />
<rect x="110" y="866" width="23" height="27" fill="#d6d6d6" />
<rect x="134" y="866" width="23" height="27" fill="#d6d6d6" />
<rect x="158" y="866" width="23" height="27" fill="#d6d6d6" />
<g fill="#2f7dc5"><circle cx="77.8" cy="875.8" r="2.3"/><path d="M74 883.3 Q74 878.5 77.8 878.5 Q82 878.5 82 882.0 Q82 883.3 80 883.3 Z"/><circle cx="72.2" cy="877.5" r="2.6" fill="#2f7dc5" stroke="#fff" stroke-width="0.8"/><path d="M68 884.5 Q68 880.1 72.2 880.1 Q76.5 880.1 76.5 884.5 Z" stroke="#fff" stroke-width="0.8"/></g>
<rect x="358" y="866" width="255" height="27" fill="#d6d6d6" />
<text x="184.5" y="885" font-size="13" fill="#111" text-anchor="start" font-weight="normal" clip-path="url(#c_name)">G1-global-sec</text>
<rect x="614" y="866" width="23" height="27" fill="#f0f0f0" />
<rect x="620.5" y="873.5" width="12" height="12" fill="#fff" stroke="#b4b4b4"/><rect x="622.0" y="875" width="9" height="9" fill="none" stroke="#ececec"/>
<path d="M623.5 879.5 L625.7 882.5 L630.0 876" fill="none" stroke="#a8a8a8" stroke-width="1.5"/>
<text x="640.5" y="885" font-size="13" fill="#111" text-anchor="start" font-weight="normal" clip-path="url(#c_type)">Security Group</text>
<rect x="766" y="866" width="23" height="27" fill="#f0f0f0" />
<rect x="772.5" y="873.5" width="12" height="12" fill="#fff" stroke="#b4b4b4"/><rect x="774.0" y="875" width="9" height="9" fill="none" stroke="#ececec"/>
<rect x="790" y="866" width="79" height="27" fill="#d6d6d6" />
<text x="986.5" y="885" font-size="13" fill="#111" text-anchor="end" font-weight="normal" clip-path="url(#c_created)">3/21/2025 06:00 PM</text>
<text x="992.5" y="885" font-size="13" fill="#111" text-anchor="start" font-weight="normal" clip-path="url(#c_desc)">123132</text>
<rect x="1167" y="866" width="118" height="27" fill="#d6d6d6" />
<rect x="1286" y="866" width="119" height="27" fill="#d6d6d6" />
<rect x="1406" y="866" width="119" height="27" fill="#d6d6d6" />
<line x1="45" y1="921.5" x2="1525" y2="921.5" stroke="#ececec" stroke-width="1" />
<line x1="64.5" y1="894" x2="64.5" y2="921" stroke="#ececec" stroke-width="1" />
<line x1="84.5" y1="894" x2="84.5" y2="921" stroke="#ececec" stroke-width="1" />
<line x1="109.5" y1="894" x2="109.5" y2="921" stroke="#ececec" stroke-width="1" />
<line x1="133.5" y1="894" x2="133.5" y2="921" stroke="#ececec" stroke-width="1" />
<line x1="157.5" y1="894" x2="157.5" y2="921" stroke="#ececec" stroke-width="1" />
<line x1="181.5" y1="894" x2="181.5" y2="921" stroke="#ececec" stroke-width="1" />
<line x1="357.5" y1="894" x2="357.5" y2="921" stroke="#ececec" stroke-width="1" />
<line x1="613.5" y1="894" x2="613.5" y2="921" stroke="#ececec" stroke-width="1" />
<line x1="637.5" y1="894" x2="637.5" y2="921" stroke="#ececec" stroke-width="1" />
<line x1="765.5" y1="894" x2="765.5" y2="921" stroke="#ececec" stroke-width="1" />
<line x1="789.5" y1="894" x2="789.5" y2="921" stroke="#ececec" stroke-width="1" />
<line x1="869.5" y1="894" x2="869.5" y2="921" stroke="#ececec" stroke-width="1" />
<line x1="989.5" y1="894" x2="989.5" y2="921" stroke="#ececec" stroke-width="1" />
<line x1="1166.5" y1="894" x2="1166.5" y2="921" stroke="#ececec" stroke-width="1" />
<line x1="1285.5" y1="894" x2="1285.5" y2="921" stroke="#ececec" stroke-width="1" />
<line x1="1405.5" y1="894" x2="1405.5" y2="921" stroke="#ececec" stroke-width="1" />
<line x1="1525.5" y1="894" x2="1525.5" y2="921" stroke="#ececec" stroke-width="1" />
<rect x="110" y="894" width="23" height="27" fill="#d6d6d6" />
<rect x="134" y="894" width="23" height="27" fill="#d6d6d6" />
<rect x="158" y="894" width="23" height="27" fill="#d6d6d6" />
<g fill="#2f7dc5"><circle cx="77.8" cy="903.8" r="2.3"/><path d="M74 911.3 Q74 906.5 77.8 906.5 Q82 906.5 82 910.0 Q82 911.3 80 911.3 Z"/><circle cx="72.2" cy="905.5" r="2.6" fill="#2f7dc5" stroke="#fff" stroke-width="0.8"/><path d="M68 912.5 Q68 908.1 72.2 908.1 Q76.5 908.1 76.5 912.5 Z" stroke="#fff" stroke-width="0.8"/></g>
<rect x="358" y="894" width="255" height="27" fill="#d6d6d6" />
<text x="184.5" y="913" font-size="13" fill="#111" text-anchor="start" font-weight="normal" clip-path="url(#c_name)">G1-local-sec</text>
<rect x="614" y="894" width="23" height="27" fill="#f0f0f0" />
<rect x="620.5" y="901.5" width="12" height="12" fill="#fff" stroke="#b4b4b4"/><rect x="622.0" y="903" width="9" height="9" fill="none" stroke="#ececec"/>
<path d="M623.5 907.5 L625.7 910.5 L630.0 904" fill="none" stroke="#a8a8a8" stroke-width="1.5"/>
<text x="640.5" y="913" font-size="13" fill="#111" text-anchor="start" font-weight="normal" clip-path="url(#c_type)">Security Group</text>
<rect x="766" y="894" width="23" height="27" fill="#f0f0f0" />
<rect x="772.5" y="901.5" width="12" height="12" fill="#fff" stroke="#b4b4b4"/><rect x="774.0" y="903" width="9" height="9" fill="none" stroke="#ececec"/>
<rect x="790" y="894" width="79" height="27" fill="#d6d6d6" />
<text x="986.5" y="913" font-size="13" fill="#111" text-anchor="end" font-weight="normal" clip-path="url(#c_created)">3/21/2025 06:00 PM</text>
<text x="992.5" y="913" font-size="13" fill="#111" text-anchor="start" font-weight="normal" clip-path="url(#c_desc)">TEST RBAC</text>
<rect x="1167" y="894" width="118" height="27" fill="#d6d6d6" />
<rect x="1286" y="894" width="119" height="27" fill="#d6d6d6" />
<rect x="1406" y="894" width="119" height="27" fill="#d6d6d6" />
<line x1="45" y1="949.5" x2="1525" y2="949.5" stroke="#ececec" stroke-width="1" />
<line x1="64.5" y1="922" x2="64.5" y2="949" stroke="#ececec" stroke-width="1" />
<line x1="84.5" y1="922" x2="84.5" y2="949" stroke="#ececec" stroke-width="1" />
<line x1="109.5" y1="922" x2="109.5" y2="949" stroke="#ececec" stroke-width="1" />
<line x1="133.5" y1="922" x2="133.5" y2="949" stroke="#ececec" stroke-width="1" />
<line x1="157.5" y1="922" x2="157.5" y2="949" stroke="#ececec" stroke-width="1" />
<line x1="181.5" y1="922" x2="181.5" y2="949" stroke="#ececec" stroke-width="1" />
<line x1="357.5" y1="922" x2="357.5" y2="949" stroke="#ececec" stroke-width="1" />
<line x1="613.5" y1="922" x2="613.5" y2="949" stroke="#ececec" stroke-width="1" />
<line x1="637.5" y1="922" x2="637.5" y2="949" stroke="#ececec" stroke-width="1" />
<line x1="765.5" y1="922" x2="765.5" y2="949" stroke="#ececec" stroke-width="1" />
<line x1="789.5" y1="922" x2="789.5" y2="949" stroke="#ececec" stroke-width="1" />
<line x1="869.5" y1="922" x2="869.5" y2="949" stroke="#ececec" stroke-width="1" />
<line x1="989.5" y1="922" x2="989.5" y2="949" stroke="#ececec" stroke-width="1" />
<line x1="1166.5" y1="922" x2="1166.5" y2="949" stroke="#ececec" stroke-width="1" />
<line x1="1285.5" y1="922" x2="1285.5" y2="949" stroke="#ececec" stroke-width="1" />
<line x1="1405.5" y1="922" x2="1405.5" y2="949" stroke="#ececec" stroke-width="1" />
<line x1="1525.5" y1="922" x2="1525.5" y2="949" stroke="#ececec" stroke-width="1" />
<rect x="110" y="922" width="23" height="27" fill="#d6d6d6" />
<rect x="134" y="922" width="23" height="27" fill="#d6d6d6" />
<rect x="158" y="922" width="23" height="27" fill="#d6d6d6" />
<circle cx="55" cy="935.5" r="6" fill="#fff" stroke="#777" stroke-width="1.4"/><circle cx="55" cy="935.5" r="3" fill="#a9a9a9"/>
<g fill="#2f7dc5"><circle cx="77.8" cy="931.8" r="2.3"/><path d="M74 939.3 Q74 934.5 77.8 934.5 Q82 934.5 82 938.0 Q82 939.3 80 939.3 Z"/><circle cx="72.2" cy="933.5" r="2.6" fill="#2f7dc5" stroke="#fff" stroke-width="0.8"/><path d="M68 940.5 Q68 936.1 72.2 936.1 Q76.5 936.1 76.5 940.5 Z" stroke="#fff" stroke-width="0.8"/></g>
<text x="360.5" y="941" font-size="13" fill="#111" text-anchor="start" font-weight="normal" clip-path="url(#c_email)">op3166@ovh.ytria.io</text>
<text x="184.5" y="941" font-size="13" fill="#111" text-anchor="start" font-weight="normal" clip-path="url(#c_name)">G3166</text>
<rect x="614" y="922" width="23" height="27" fill="#f0f0f0" />
<rect x="620.5" y="929.5" width="12" height="12" fill="#fff" stroke="#b4b4b4"/><rect x="622.0" y="931" width="9" height="9" fill="none" stroke="#ececec"/>
<path d="M623.5 935.5 L625.7 938.5 L630.0 932" fill="none" stroke="#a8a8a8" stroke-width="1.5"/>
<text x="640.5" y="941" font-size="13" fill="#111" text-anchor="start" font-weight="normal" clip-path="url(#c_type)">Distribution list</text>
<rect x="766" y="922" width="23" height="27" fill="#f0f0f0" />
<rect x="772.5" y="929.5" width="12" height="12" fill="#fff" stroke="#b4b4b4"/><rect x="774.0" y="931" width="9" height="9" fill="none" stroke="#ececec"/>
<rect x="790" y="922" width="79" height="27" fill="#d6d6d6" />
<text x="986.5" y="941" font-size="13" fill="#111" text-anchor="end" font-weight="normal" clip-path="url(#c_created)">3/21/2025 06:01 PM</text>
<text x="992.5" y="941" font-size="13" fill="#111" text-anchor="start" font-weight="normal" clip-path="url(#c_desc)">OPGroup 3166</text>
<text x="1169" y="941" font-size="13" fill="#111" text-anchor="start" font-weight="normal" clip-path="url(#c_owner)">Organization Management</text>
<rect x="1286" y="922" width="119" height="27" fill="#d6d6d6" />
<rect x="1406" y="922" width="119" height="27" fill="#d6d6d6" />
<line x1="45" y1="977.5" x2="1525" y2="977.5" stroke="#ececec" stroke-width="1" />
<line x1="64.5" y1="950" x2="64.5" y2="977" stroke="#ececec" stroke-width="1" />
<line x1="84.5" y1="950" x2="84.5" y2="977" stroke="#ececec" stroke-width="1" />
<line x1="109.5" y1="950" x2="109.5" y2="977" stroke="#ececec" stroke-width="1" />
<line x1="133.5" y1="950" x2="133.5" y2="977" stroke="#ececec" stroke-width="1" />
<line x1="157.5" y1="950" x2="157.5" y2="977" stroke="#ececec" stroke-width="1" />
<line x1="181.5" y1="950" x2="181.5" y2="977" stroke="#ececec" stroke-width="1" />
<line x1="357.5" y1="950" x2="357.5" y2="977" stroke="#ececec" stroke-width="1" />
<line x1="613.5" y1="950" x2="613.5" y2="977" stroke="#ececec" stroke-width="1" />
<line x1="637.5" y1="950" x2="637.5" y2="977" stroke="#ececec" stroke-width="1" />
<line x1="765.5" y1="950" x2="765.5" y2="977" stroke="#ececec" stroke-width="1" />
<line x1="789.5" y1="950" x2="789.5" y2="977" stroke="#ececec" stroke-width="1" />
<line x1="869.5" y1="950" x2="869.5" y2="977" stroke="#ececec" stroke-width="1" />
<line x1="989.5" y1="950" x2="989.5" y2="977" stroke="#ececec" stroke-width="1" />
<line x1="1166.5" y1="950" x2="1166.5" y2="977" stroke="#ececec" stroke-width="1" />
<line x1="1285.5" y1="950" x2="1285.5" y2="977" stroke="#ececec" stroke-width="1" />
<line x1="1405.5" y1="950" x2="1405.5" y2="977" stroke="#ececec" stroke-width="1" />
<line x1="1525.5" y1="950" x2="1525.5" y2="977" stroke="#ececec" stroke-width="1" />
<rect x="110" y="950" width="23" height="27" fill="#d6d6d6" />
<rect x="134" y="950" width="23" height="27" fill="#d6d6d6" />
<rect x="158" y="950" width="23" height="27" fill="#d6d6d6" />
<circle cx="55" cy="963.5" r="6" fill="#fff" stroke="#777" stroke-width="1.4"/><circle cx="55" cy="963.5" r="3" fill="#a9a9a9"/>
<g fill="#2f7dc5"><circle cx="77.8" cy="959.8" r="2.3"/><path d="M74 967.3 Q74 962.5 77.8 962.5 Q82 962.5 82 966.0 Q82 967.3 80 967.3 Z"/><circle cx="72.2" cy="961.5" r="2.6" fill="#2f7dc5" stroke="#fff" stroke-width="0.8"/><path d="M68 968.5 Q68 964.1 72.2 964.1 Q76.5 964.1 76.5 968.5 Z" stroke="#fff" stroke-width="0.8"/></g>
<text x="360.5" y="969" font-size="13" fill="#111" text-anchor="start" font-weight="normal" clip-path="url(#c_email)">global@ovh.ytria.io</text>
<text x="184.5" y="969" font-size="13" fill="#111" text-anchor="start" font-weight="normal" clip-path="url(#c_name)">Global</text>
<rect x="614" y="950" width="23" height="27" fill="#f0f0f0" />
<rect x="620.5" y="957.5" width="12" height="12" fill="#fff" stroke="#b4b4b4"/><rect x="622.0" y="959" width="9" height="9" fill="none" stroke="#ececec"/>
<path d="M623.5 963.5 L625.7 966.5 L630.0 960" fill="none" stroke="#a8a8a8" stroke-width="1.5"/>
<text x="640.5" y="969" font-size="13" fill="#111" text-anchor="start" font-weight="normal" clip-path="url(#c_type)">Distribution list</text>
<rect x="766" y="950" width="23" height="27" fill="#f0f0f0" />
<rect x="772.5" y="957.5" width="12" height="12" fill="#fff" stroke="#b4b4b4"/><rect x="774.0" y="959" width="9" height="9" fill="none" stroke="#ececec"/>
<rect x="790" y="950" width="79" height="27" fill="#d6d6d6" />
<text x="986.5" y="969" font-size="13" fill="#111" text-anchor="end" font-weight="normal" clip-path="url(#c_created)">0/10/2024 09:08 PM</text>
<rect x="990" y="950" width="176" height="27" fill="#d6d6d6" />
<text x="1169" y="969" font-size="13" fill="#111" text-anchor="start" font-weight="normal" clip-path="url(#c_owner)">Organization Management</text>
<rect x="1286" y="950" width="119" height="27" fill="#d6d6d6" />
<rect x="1406" y="950" width="119" height="27" fill="#d6d6d6" />
<line x1="45" y1="1005.5" x2="1525" y2="1005.5" stroke="#ececec" stroke-width="1" />
<line x1="64.5" y1="978" x2="64.5" y2="1005" stroke="#ececec" stroke-width="1" />
<line x1="84.5" y1="978" x2="84.5" y2="1005" stroke="#ececec" stroke-width="1" />
<line x1="109.5" y1="978" x2="109.5" y2="1005" stroke="#ececec" stroke-width="1" />
<line x1="133.5" y1="978" x2="133.5" y2="1005" stroke="#ececec" stroke-width="1" />
<line x1="157.5" y1="978" x2="157.5" y2="1005" stroke="#ececec" stroke-width="1" />
<line x1="181.5" y1="978" x2="181.5" y2="1005" stroke="#ececec" stroke-width="1" />
<line x1="357.5" y1="978" x2="357.5" y2="1005" stroke="#ececec" stroke-width="1" />
<line x1="613.5" y1="978" x2="613.5" y2="1005" stroke="#ececec" stroke-width="1" />
<line x1="637.5" y1="978" x2="637.5" y2="1005" stroke="#ececec" stroke-width="1" />
<line x1="765.5" y1="978" x2="765.5" y2="1005" stroke="#ececec" stroke-width="1" />
<line x1="789.5" y1="978" x2="789.5" y2="1005" stroke="#ececec" stroke-width="1" />
<line x1="869.5" y1="978" x2="869.5" y2="1005" stroke="#ececec" stroke-width="1" />
<line x1="989.5" y1="978" x2="989.5" y2="1005" stroke="#ececec" stroke-width="1" />
<line x1="1166.5" y1="978" x2="1166.5" y2="1005" stroke="#ececec" stroke-width="1" />
<line x1="1285.5" y1="978" x2="1285.5" y2="1005" stroke="#ececec" stroke-width="1" />
<line x1="1405.5" y1="978" x2="1405.5" y2="1005" stroke="#ececec" stroke-width="1" />
<line x1="1525.5" y1="978" x2="1525.5" y2="1005" stroke="#ececec" stroke-width="1" />
<rect x="110" y="978" width="23" height="27" fill="#d6d6d6" />
<rect x="134" y="978" width="23" height="27" fill="#d6d6d6" />
<rect x="158" y="978" width="23" height="27" fill="#d6d6d6" />
<g fill="#2f7dc5"><circle cx="77.8" cy="987.8" r="2.3"/><path d="M74 995.3 Q74 990.5 77.8 990.5 Q82 990.5 82 994.0 Q82 995.3 80 995.3 Z"/><circle cx="72.2" cy="989.5" r="2.6" fill="#2f7dc5" stroke="#fff" stroke-width="0.8"/><path d="M68 996.5 Q68 992.1 72.2 992.1 Q76.5 992.1 76.5 996.5 Z" stroke="#fff" stroke-width="0.8"/></g>
<rect x="358" y="978" width="255" height="27" fill="#d6d6d6" />
<text x="184.5" y="997" font-size="13" fill="#111" text-anchor="start" font-weight="normal" clip-path="url(#c_name)">global admins</text>
<rect x="614" y="978" width="23" height="27" fill="#d6d6d6" />
<text x="640.5" y="997" font-size="13" fill="#111" text-anchor="start" font-weight="normal" clip-path="url(#c_type)">Security Group</text>
<rect x="766" y="978" width="23" height="27" fill="#f0f0f0" />
<rect x="772.5" y="985.5" width="12" height="12" fill="#fff" stroke="#b4b4b4"/><rect x="774.0" y="987" width="9" height="9" fill="none" stroke="#ececec"/>
<text x="792.5" y="997" font-size="13" fill="#111" text-anchor="start" font-weight="normal" clip-path="url(#c_priv)">Private</text>
<text x="986.5" y="997" font-size="13" fill="#111" text-anchor="end" font-weight="normal" clip-path="url(#c_created)">1/30/2025 01:11 PM</text>
<rect x="990" y="978" width="176" height="27" fill="#d6d6d6" />
<text x="1169" y="997" font-size="13" fill="#111" text-anchor="start" font-weight="normal" clip-path="url(#c_owner)">AADMIN1@sygx2.onmicrosoft.com</text>
<rect x="1286" y="978" width="119" height="27" fill="#d6d6d6" />
<rect x="1406" y="978" width="119" height="27" fill="#d6d6d6" />
<line x1="45" y1="1033.5" x2="1525" y2="1033.5" stroke="#ececec" stroke-width="1" />
<line x1="64.5" y1="1006" x2="64.5" y2="1033" stroke="#ececec" stroke-width="1" />
<line x1="84.5" y1="1006" x2="84.5" y2="1033" stroke="#ececec" stroke-width="1" />
<line x1="109.5" y1="1006" x2="109.5" y2="1033" stroke="#ececec" stroke-width="1" />
<line x1="133.5" y1="1006" x2="133.5" y2="1033" stroke="#ececec" stroke-width="1" />
<line x1="157.5" y1="1006" x2="157.5" y2="1033" stroke="#ececec" stroke-width="1" />
<line x1="181.5" y1="1006" x2="181.5" y2="1033" stroke="#ececec" stroke-width="1" />
<line x1="357.5" y1="1006" x2="357.5" y2="1033" stroke="#ececec" stroke-width="1" />
<line x1="613.5" y1="1006" x2="613.5" y2="1033" stroke="#ececec" stroke-width="1" />
<line x1="637.5" y1="1006" x2="637.5" y2="1033" stroke="#ececec" stroke-width="1" />
<line x1="765.5" y1="1006" x2="765.5" y2="1033" stroke="#ececec" stroke-width="1" />
<line x1="789.5" y1="1006" x2="789.5" y2="1033" stroke="#ececec" stroke-width="1" />
<line x1="869.5" y1="1006" x2="869.5" y2="1033" stroke="#ececec" stroke-width="1" />
<line x1="989.5" y1="1006" x2="989.5" y2="1033" stroke="#ececec" stroke-width="1" />
<line x1="1166.5" y1="1006" x2="1166.5" y2="1033" stroke="#ececec" stroke-width="1" />
<line x1="1285.5" y1="1006" x2="1285.5" y2="1033" stroke="#ececec" stroke-width="1" />
<line x1="1405.5" y1="1006" x2="1405.5" y2="1033" stroke="#ececec" stroke-width="1" />
<line x1="1525.5" y1="1006" x2="1525.5" y2="1033" stroke="#ececec" stroke-width="1" />
<rect x="110" y="1006" width="23" height="27" fill="#d6d6d6" />
<g fill="#8b57a8"><circle cx="141.7" cy="1014.3" r="2.2"/><circle cx="148" cy="1014" r="1.7"/><path d="M138 1017.5 H145.5 V1023 Q145.5 1026 141.7 1026 Q138 1026 138 1023 Z"/><path d="M146.5 1017.5 H150.5 V1021 Q150.5 1023.5 146.5 1023.5 Z"/></g><circle cx="154.5" cy="1016" r="0.7" fill="#b04a3a"/>
<rect x="158" y="1006" width="23" height="27" fill="#d6d6d6" />
<circle cx="55" cy="1019.5" r="6" fill="#fff" stroke="#777" stroke-width="1.4"/><circle cx="55" cy="1019.5" r="3" fill="#a9a9a9"/>
<g fill="#2f7dc5"><circle cx="77.8" cy="1015.8" r="2.3"/><path d="M74 1023.3 Q74 1018.5 77.8 1018.5 Q82 1018.5 82 1022.0 Q82 1023.3 80 1023.3 Z"/><circle cx="72.2" cy="1017.5" r="2.6" fill="#2f7dc5" stroke="#fff" stroke-width="0.8"/><path d="M68 1024.5 Q68 1020.1 72.2 1020.1 Q76.5 1020.1 76.5 1024.5 Z" stroke="#fff" stroke-width="0.8"/></g>
<text x="360.5" y="1025" font-size="13" fill="#111" text-anchor="start" font-weight="normal" clip-path="url(#c_email)">greenteam@ovh.ytria.io</text>
<text x="184.5" y="1025" font-size="13" fill="#111" text-anchor="start" font-weight="normal" clip-path="url(#c_name)">Green team</text>
<rect x="614" y="1006" width="23" height="27" fill="#d6d6d6" />
<text x="640.5" y="1025" font-size="13" fill="#111" text-anchor="start" font-weight="normal" clip-path="url(#c_type)">Microsoft 365 group</text>
<rect x="766" y="1006" width="23" height="27" fill="#f0f0f0" />
<rect x="772.5" y="1013.5" width="12" height="12" fill="#fff" stroke="#b4b4b4"/><rect x="774.0" y="1015" width="9" height="9" fill="none" stroke="#ececec"/>
<text x="792.5" y="1025" font-size="13" fill="#111" text-anchor="start" font-weight="normal" clip-path="url(#c_priv)">Private</text>
<text x="986.5" y="1025" font-size="13" fill="#111" text-anchor="end" font-weight="normal" clip-path="url(#c_created)">0/31/2024 05:02 PM</text>
<text x="992.5" y="1025" font-size="13" fill="#111" text-anchor="start" font-weight="normal" clip-path="url(#c_desc)">Welcome to the team that we built</text>
<text x="1169" y="1025" font-size="13" fill="#111" text-anchor="start" font-weight="normal" clip-path="url(#c_owner)">AADMIN1@sygx2.onmicrosoft.com</text>
<text x="1402.5" y="1025" font-size="13" fill="#111" text-anchor="end" font-weight="normal" >1.42MB</text>
<text x="1522.5" y="1025" font-size="13" fill="#111" text-anchor="end" font-weight="normal" >25.00TB</text>
<rect x="110" y="1034" width="23" height="3" fill="#d6d6d6" />
<rect x="134" y="1034" width="23" height="3" fill="#d6d6d6" />
<rect x="158" y="1034" width="23" height="3" fill="#d6d6d6" />
<rect x="358" y="1034" width="255" height="3" fill="#d6d6d6" />
<rect x="614" y="1034" width="23" height="3" fill="#f0f0f0" />
<rect x="766" y="1034" width="23" height="3" fill="#f0f0f0" />
<rect x="790" y="1034" width="79" height="3" fill="#d6d6d6" />
<rect x="1286" y="1034" width="119" height="3" fill="#d6d6d6" />
<rect x="1406" y="1034" width="119" height="3" fill="#d6d6d6" />
<line x1="64.5" y1="1034" x2="64.5" y2="1037" stroke="#ececec" stroke-width="1" />
<line x1="84.5" y1="1034" x2="84.5" y2="1037" stroke="#ececec" stroke-width="1" />
<line x1="109.5" y1="1034" x2="109.5" y2="1037" stroke="#ececec" stroke-width="1" />
<line x1="133.5" y1="1034" x2="133.5" y2="1037" stroke="#ececec" stroke-width="1" />
<line x1="157.5" y1="1034" x2="157.5" y2="1037" stroke="#ececec" stroke-width="1" />
<line x1="181.5" y1="1034" x2="181.5" y2="1037" stroke="#ececec" stroke-width="1" />
<line x1="357.5" y1="1034" x2="357.5" y2="1037" stroke="#ececec" stroke-width="1" />
<line x1="613.5" y1="1034" x2="613.5" y2="1037" stroke="#ececec" stroke-width="1" />
<line x1="637.5" y1="1034" x2="637.5" y2="1037" stroke="#ececec" stroke-width="1" />
<line x1="765.5" y1="1034" x2="765.5" y2="1037" stroke="#ececec" stroke-width="1" />
<line x1="789.5" y1="1034" x2="789.5" y2="1037" stroke="#ececec" stroke-width="1" />
<line x1="869.5" y1="1034" x2="869.5" y2="1037" stroke="#ececec" stroke-width="1" />
<line x1="989.5" y1="1034" x2="989.5" y2="1037" stroke="#ececec" stroke-width="1" />
<line x1="1166.5" y1="1034" x2="1166.5" y2="1037" stroke="#ececec" stroke-width="1" />
<line x1="1285.5" y1="1034" x2="1285.5" y2="1037" stroke="#ececec" stroke-width="1" />
<line x1="1405.5" y1="1034" x2="1405.5" y2="1037" stroke="#ececec" stroke-width="1" />
<line x1="357.5" y1="250" x2="357.5" y2="1037" stroke="#26324a" stroke-width="1" />
<line x1="1166.5" y1="250" x2="1166.5" y2="1037" stroke="#2a7fd4" stroke-width="1.2" />
<line x1="1285" y1="250" x2="1285" y2="1037" stroke="#2a7fd4" stroke-width="1.2" />
<rect x="1526" y="185" width="42" height="852" fill="#ffffff" />
<rect x="1526" y="185" width="42" height="64" fill="url(#hg)" />
<line x1="1525" y1="249.5" x2="1568" y2="249.5" stroke="#b9b9b9" stroke-width="1" />
<line x1="1525.5" y1="250" x2="1525.5" y2="1037" stroke="#ececec" stroke-width="1" />
<rect x="1568" y="185" width="16" height="852" fill="#f7f7f7" />
<line x1="1568.5" y1="185" x2="1568.5" y2="1037" stroke="#e6e6e6" stroke-width="1" />
<path d="M1571.8 194.8 L1576.5 190 L1581.2 194.8 Z" fill="#3c4a70"/><path d="M1572 1024 L1576 1028.5 L1580 1024 Z" fill="#3c4668"/>
<rect x="1569.5" y="202" width="14" height="191.5" rx="1.5" fill="#8b8b8b"/>
<rect x="1585" y="184" width="20" height="853" fill="#82478f" />
<rect x="1605" y="184" width="20" height="853" fill="#935aa2" />
<path d="M1597 604.5 L1591.5 610.5 L1597 616.5" fill="none" stroke="#fff" stroke-width="1.5"/><path d="M1613 604.5 L1618.5 610.5 L1613 616.5" fill="none" stroke="#fff" stroke-width="1.5"/>
<rect x="1625" y="185" width="295" height="852" fill="#ffffff" />
<rect x="1625" y="184" width="293" height="60" fill="#9fd89f" />
<path d="M1643.5 213 V203.5 Q1643.5 201.5 1645.3 201.5 Q1647 201.5 1647 203.5 V209.5 L1652.5 211 Q1655.5 212 1655 215.5 L1654.3 219 Q1653.5 222.5 1650 222.5 H1647.5 Q1645.5 222.5 1644 220.5 L1638 214.8 Q1637 213.5 1638.5 212.5 Q1639.8 211.8 1641 213 Z" fill="none" stroke="#222" stroke-width="1.3"/>
<text x="1665" y="209" font-size="15" fill="#1e2a1e" text-anchor="start" font-weight="bold" >Please select any row to</text>
<text x="1665" y="231" font-size="15" fill="#1e2a1e" text-anchor="start" font-weight="bold" >continue...</text>
<rect x="1633.5" y="256.5" width="276" height="31" rx="4" fill="#fff" stroke="#d2d2d2"/>
<circle cx="1650.5" cy="270.5" r="5.3" fill="none" stroke="#444" stroke-width="1.2"/><path d="M1654.3 274.3 L1658.5 278.5" stroke="#444" stroke-width="1.3"/>
<text x="1668" y="277" font-size="14" fill="#222" text-anchor="start" font-weight="normal" >owner</text>
<text x="1633" y="314" font-size="11.8" fill="#222" text-anchor="start" font-weight="normal" >Show technical and s</text>
<rect x="1633.5" y="330.5" width="122" height="23" rx="3" fill="#fff" stroke="#d0d0d0"/><rect x="1760.5" y="330.5" width="121" height="23" rx="3" fill="#fff" stroke="#d0d0d0"/><rect x="1886.5" y="330.5" width="23" height="23" rx="3" fill="#f0f0f0" stroke="#d0d0d0"/>
<rect x="1658.5" y="336" width="13" height="13" rx="2" fill="none" stroke="#333" stroke-width="1.1"/><path d="M1661.5 342.5 H1668.5 M1665 339 V346" stroke="#333" stroke-width="1.1"/>
<rect x="1782.5" y="336" width="13" height="13" rx="2.5" fill="none" stroke="#333" stroke-width="1.1"/><path d="M1785.5 342.5 H1792.5" stroke="#333" stroke-width="1.1"/>
<text x="1679.5" y="347.5" font-size="12" fill="#222" text-anchor="start" font-weight="normal" >Expand all</text>
<text x="1803" y="347.5" font-size="12" fill="#222" text-anchor="start" font-weight="normal" >Collapse all</text>
<path d="M1890.5 350 L1897 343.5 M1893.5 343.5 H1897 V347 M1906 334 L1899.5 340.5 M1899.5 337 V340.5 H1903" fill="none" stroke="#333" stroke-width="1.1"/>
<line x1="1625" y1="362.5" x2="1920" y2="362.5" stroke="#e2e2e2" stroke-width="1" />
<g clip-path="url(#c_panel)">
<rect x="1626" y="363" width="276.5" height="674" fill="#f9f9f9" />
<line x1="1902.5" y1="363" x2="1902.5" y2="1037" stroke="#e0e0e0" stroke-width="1" />
<rect x="1907" y="643" width="7" height="390" fill="#c8c8c8" />
<rect x="1633.5" y="300.5" width="260" height="261" rx="4.5" fill="#fff" stroke="#dcdcdc"/>
<rect x="1643.5" y="345.5" width="240" height="28" rx="4" fill="#f9f9f9" stroke="#d8d8d8" stroke-dasharray="3,2"/>
<text x="1650" y="365.5" font-size="14" fill="#c2c2c2" text-anchor="start" font-weight="normal" >No data available</text>
<rect x="1639" y="402" width="249" height="75" rx="4" fill="#f6eff8"/>
<text x="1643" y="419.5" font-size="12.2" fill="#1a1a1a" text-anchor="start" font-weight="bold" letter-spacing="-0.35">Owner Names</text>
<path d="M1870.4 415 Q1876 405.5 1881.6 415" fill="none" stroke="#9a5db0" stroke-width="1.3"/><rect x="1874.2" y="413" width="3.6" height="3.6" rx="1" fill="#8f55a8"/>
<rect x="1643.5" y="426.5" width="240" height="27" rx="4" fill="#ffffff" stroke="#d8d8d8" stroke-dasharray="3,2"/>
<text x="1650" y="445.5" font-size="14" fill="#c2c2c2" text-anchor="start" font-weight="normal" >No data available</text>
<rect x="1814.5" y="456.5" width="68" height="17" fill="#fff" stroke="#b08cc0"/><rect x="1866" y="456" width="17" height="18" fill="#9b5fb3"/><path d="M1831.5 456.5 V473.5 M1848.5 456.5 V473.5" stroke="#b08cc0"/><path d="M1818 461.5 H1828 M1819.5 464.5 H1826.5 M1821 467.5 H1825" stroke="#9b5fb3" stroke-width="1"/><path d="M1834.5 461.5 H1841.5 M1835.5 464.5 H1840.5 M1836.5 467.5 H1839.5 M1844 460 V471 M1841.5 468.5 L1844 471 L1846.5 468.5" fill="none" stroke="#9b5fb3" stroke-width="1"/><circle cx="1853" cy="465" r="1" fill="#9b5fb3"/><circle cx="1857" cy="465" r="1" fill="#9b5fb3"/><circle cx="1861" cy="465" r="1" fill="#9b5fb3"/><path d="M1874 459.5 L1879.5 465 L1877 466 L1873.5 469.5 L1870 466 L1873 462.5 Z M1871 468.5 L1868.5 471" fill="#fff" stroke="#fff" stroke-width="1.2"/>
<text x="1643" y="499" font-size="12" fill="#1a1a1a" text-anchor="start" font-weight="normal" >Owner Types</text>
<path d="M1870.6 495 Q1876 485 1881.4 495" fill="none" stroke="#9a5db0" stroke-width="1.3"/><path d="M1872.8 496 A3.2 3.2 0 0 0 1879.2 496 Z" fill="#8f55a8"/><circle cx="1876" cy="495.5" r="2.3" fill="#8f55a8"/>
<path d="M1870.3 488.2 L1881.8 499.6" stroke="#fff" stroke-width="2.2"/><path d="M1870.3 488.2 L1881.8 499.6" stroke="#9a5db0" stroke-width="1.2"/>
<rect x="1643.5" y="506.5" width="240" height="27" rx="4" fill="#f9f9f9" stroke="#d8d8d8" stroke-dasharray="3,2"/>
<text x="1650" y="525.5" font-size="14" fill="#c2c2c2" text-anchor="start" font-weight="normal" >No data available</text>
<rect x="1633.5" y="571.5" width="260" height="45" rx="4.5" fill="#fff" stroke="#dcdcdc"/>
<text x="1646" y="588.5" font-size="12" fill="#aaaaaa" text-anchor="start" font-weight="normal" >Found: 0</text>
<text x="1646" y="608.5" font-size="15.2" fill="#b0b0b0" text-anchor="start" font-weight="bold" >On-Premises from AAD</text>
<path d="M1867 599 L1873 593 L1879 599" fill="none" stroke="#c8c8c8" stroke-width="1.2"/>
<rect x="1633.5" y="625.5" width="260" height="130" rx="4.5" fill="#fff" stroke="#dcdcdc"/>
<text x="1646" y="642.5" font-size="12" fill="#222" text-anchor="start" font-weight="normal" >Found: 1</text>
<text x="1646" y="662" font-size="15.6" fill="#1a1a1a" text-anchor="start" font-weight="bold" >Mailbox Info</text>
<path d="M1867 650 L1873 644 L1879 650" fill="none" stroke="#333" stroke-width="1.2"/>
<text x="1643" y="692.5" font-size="12" fill="#222" text-anchor="start" font-weight="normal" >Litigation Hold Owner</text>
<path d="M1870.6 688 Q1876 678 1881.4 688" fill="none" stroke="#9a5db0" stroke-width="1.3"/><path d="M1872.8 689 A3.2 3.2 0 0 0 1879.2 689 Z" fill="#8f55a8"/><circle cx="1876" cy="688.5" r="2.3" fill="#8f55a8"/>
<path d="M1870.3 681.2 L1881.8 692.6" stroke="#fff" stroke-width="2.2"/><path d="M1870.3 681.2 L1881.8 692.6" stroke="#9a5db0" stroke-width="1.2"/>
<rect x="1643.5" y="699.5" width="240" height="27" rx="4" fill="#f9f9f9" stroke="#d8d8d8" stroke-dasharray="3,2"/>
<text x="1650" y="718.5" font-size="14" fill="#c2c2c2" text-anchor="start" font-weight="normal" >No data available</text>
<rect x="1633.5" y="764.5" width="260" height="210" rx="4.5" fill="#fff" stroke="#dcdcdc"/>
<text x="1646" y="782" font-size="12" fill="#222" text-anchor="start" font-weight="normal" >Found: 2</text>
<text x="1646" y="801" font-size="15.2" fill="#1a1a1a" text-anchor="start" font-weight="bold" >Doc Library Info</text>
<path d="M1867 789 L1873 783 L1879 789" fill="none" stroke="#333" stroke-width="1.2"/>
<text x="1643" y="832" font-size="12" fill="#222" text-anchor="start" font-weight="normal" >Owner Type</text>
<path d="M1870.6 827 Q1876 817 1881.4 827" fill="none" stroke="#9a5db0" stroke-width="1.3"/><path d="M1872.8 828 A3.2 3.2 0 0 0 1879.2 828 Z" fill="#8f55a8"/><circle cx="1876" cy="827.5" r="2.3" fill="#8f55a8"/>
<path d="M1870.3 820.2 L1881.8 831.6" stroke="#fff" stroke-width="2.2"/><path d="M1870.3 820.2 L1881.8 831.6" stroke="#9a5db0" stroke-width="1.2"/>
<rect x="1643.5" y="838.5" width="240" height="27" rx="4" fill="#f9f9f9" stroke="#d8d8d8" stroke-dasharray="3,2"/>
<text x="1650" y="857.5" font-size="14" fill="#c2c2c2" text-anchor="start" font-weight="normal" >No data available</text>
<text x="1643" y="911.5" font-size="12" fill="#222" text-anchor="start" font-weight="normal" >Owner Name</text>
<path d="M1870.6 907 Q1876 897 1881.4 907" fill="none" stroke="#9a5db0" stroke-width="1.3"/><path d="M1872.8 908 A3.2 3.2 0 0 0 1879.2 908 Z" fill="#8f55a8"/><circle cx="1876" cy="907.5" r="2.3" fill="#8f55a8"/>
<path d="M1870.3 900.2 L1881.8 911.6" stroke="#fff" stroke-width="2.2"/><path d="M1870.3 900.2 L1881.8 911.6" stroke="#9a5db0" stroke-width="1.2"/>
<rect x="1643.5" y="918.5" width="240" height="27" rx="4" fill="#f9f9f9" stroke="#d8d8d8" stroke-dasharray="3,2"/>
<text x="1650" y="937.5" font-size="14" fill="#c2c2c2" text-anchor="start" font-weight="normal" >No data available</text>
<rect x="1633.5" y="984.5" width="260" height="44" rx="4.5" fill="#fff" stroke="#dcdcdc"/>
<text x="1646" y="1000.5" font-size="12" fill="#aaaaaa" text-anchor="start" font-weight="normal" >Found: 0</text>
<text x="1646" y="1019" font-size="15.2" fill="#b0b0b0" text-anchor="start" font-weight="bold" >On-Premises fields</text>
<path d="M1867 1009 L1873 1003 L1879 1009" fill="none" stroke="#c8c8c8" stroke-width="1.2"/>
</g>
<rect x="1744" y="278" width="174" height="46" rx="5" fill="#2d2d2d"/><path d="M1891 323.5 L1898 330 L1905 323.5 Z" fill="#2d2d2d"/>
<text x="1757" y="306" font-size="13" fill="#ffffff" text-anchor="start" font-weight="bold" >Switch to compact view.</text>
<rect x="0" y="1037" width="1920" height="20" fill="#fafafa" />
<text x="7.3" y="1052" font-size="12.9" fill="#111" text-anchor="start" font-weight="normal" >Rows Loaded: 120 | Rows Displayed: 120</text>
<rect x="2" y="1057" width="1918" height="20" fill="#d4d4d4" />
<text x="5.5" y="1072" font-size="11.5" fill="#555" text-anchor="start" font-weight="normal" >Ready</text>
<text x="1815.5" y="1072" font-size="11.2" fill="#a8a8a8" text-anchor="start" font-weight="normal" >CAP</text>
<text x="1848.5" y="1072" font-size="11.2" fill="#222" text-anchor="start" font-weight="normal" >NUM</text>
<text x="1886" y="1072" font-size="11.2" fill="#a8a8a8" text-anchor="start" font-weight="normal" >SCRL</text>
<rect x="0" y="1077" width="1920" height="1" fill="#f4f4f4" />
<rect x="0" y="1078" width="1920" height="2" fill="#3a3a3a" />
<rect x="48" y="1078" width="288" height="2" fill="#dcdcdc" />
<rect x="0" y="29" width="2" height="1048" fill="#ffffff" />
<rect x="1918" y="29" width="2" height="1048" fill="#ffffff" /></svg></body></html>
